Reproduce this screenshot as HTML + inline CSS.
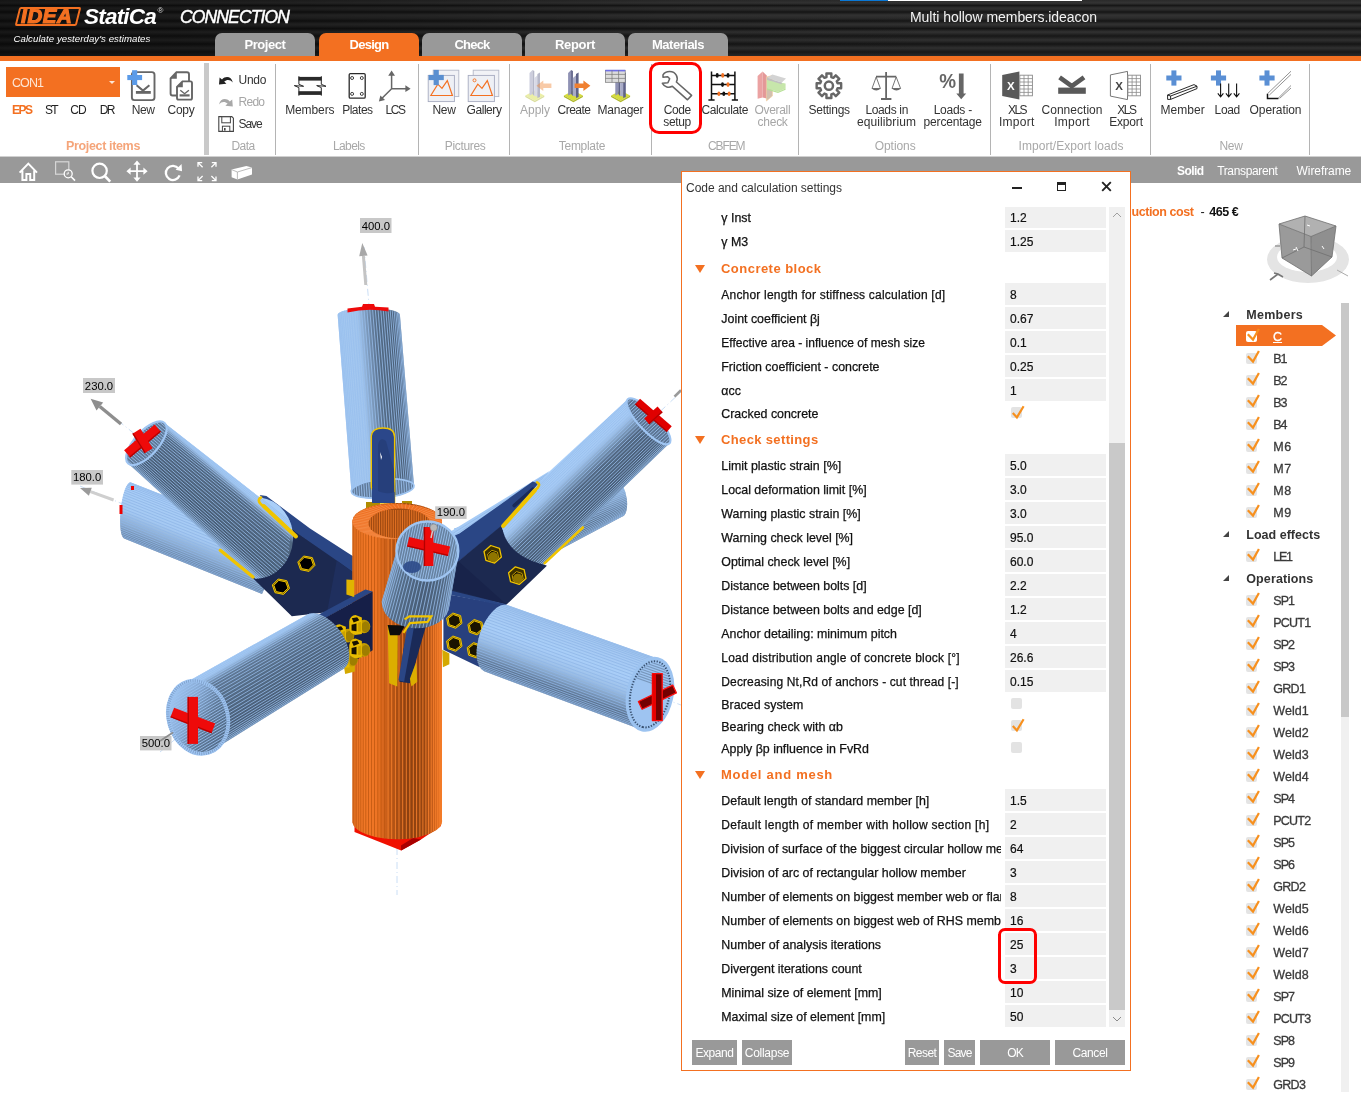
<!DOCTYPE html>
<html lang="en"><head><meta charset="utf-8"><title>IDEA StatiCa Connection</title>
<style>
html,body{margin:0;padding:0;background:#fff;}
body{width:1361px;height:1098px;position:relative;overflow:hidden;font-family:"Liberation Sans",sans-serif;}
.t{position:absolute;white-space:nowrap;margin:0;padding:0;}
.r{position:absolute;}
#app{position:absolute;left:0;top:0;width:1361px;height:1098px;will-change:transform;}
svg{overflow:visible}

#hdr{position:absolute;left:0;top:0;width:1361px;height:56px;background:
 linear-gradient(90deg, rgba(0,0,0,0.5) 0, rgba(0,0,0,0.35) 22%, rgba(0,0,0,0.08) 50%, rgba(0,0,0,0) 70%),
 linear-gradient(180deg,#2a2a2a 0,#343434 3px,#171717 5.5px,#303030 8px,#292929 10px,#151515 12px,#333 15px,#2c2c2c 18px,#161616 21px,#323232 24px,#2a2a2a 26px,#141414 28.6px,#323232 32px,#171717 36px,#303030 40px,#151515 44px,#303030 48px,#181818 52px,#2a2a2a 56px);}
#logo{position:absolute;left:17px;top:6.5px;width:62px;height:19px;box-sizing:border-box;border:2px solid #f37021;border-radius:2px;transform:skewX(-14deg);overflow:hidden;}
#logo span{position:absolute;left:2px;top:-3px;font:bold italic 20px "Liberation Sans",sans-serif;color:#f37021;letter-spacing:0.6px;transform:skewX(14deg) scaleX(1.02);transform-origin:left;line-height:20px;-webkit-text-stroke:1.2px #f37021;}
.tab{position:absolute;top:33px;width:100px;height:23px;border-radius:7px 7px 0 0;}

#dlg{position:absolute;left:681px;top:171px;width:450px;height:900px;box-sizing:border-box;border:1px solid #f37021;background:#fff;}
</style></head>
<body>
<div id="app">
<!-- part_header -->
<div id="hdr"></div>
<div class="r" style="left:840px;top:0px;width:48px;height:1px;background:#0a78d6;"></div>
<div class="r" style="left:888px;top:0px;width:194px;height:1px;background:#ffffff;"></div>
<div id="logo"><span>IDEA</span></div>
<div class="t" style="left:84.00px;top:3.90px;height:26px;line-height:26px;font-size:22.5px;color:#fff;font-weight:bold;font-style:italic;letter-spacing:-0.789px;">StatiCa</div>
<div class="t" style="left:157.50px;top:6.40px;height:10px;line-height:10px;font-size:8px;color:#ddd;">®</div>
<div class="t" style="left:180.00px;top:6.40px;height:22px;line-height:22px;font-size:17.5px;color:#fff;font-style:italic;letter-spacing:-0.864px;-webkit-text-stroke:0.45px #fff;">CONNECTION</div>
<div class="t" style="left:13.50px;top:32.90px;height:12px;line-height:12px;font-size:9.6px;color:#fff;font-style:italic;letter-spacing:0.074px;">Calculate yesterday&#x27;s estimates</div>
<div class="t" style="left:910.00px;top:7.90px;height:18px;line-height:18px;font-size:14px;color:#f2f2f2;letter-spacing:-0.047px;">Multi hollow members.ideacon</div>
<div class="tab" style="left:215px;background:#999"></div>
<div class="t" style="left:244.50px;top:37.40px;height:16px;line-height:16px;font-size:13px;color:#fff;font-weight:bold;letter-spacing:-0.439px;">Project</div>
<div class="tab" style="left:319px;background:#f37021"></div>
<div class="t" style="left:349.50px;top:37.40px;height:16px;line-height:16px;font-size:13px;color:#fff;font-weight:bold;letter-spacing:-0.724px;">Design</div>
<div class="tab" style="left:422px;background:#999"></div>
<div class="t" style="left:454.50px;top:37.40px;height:16px;line-height:16px;font-size:13px;color:#fff;font-weight:bold;letter-spacing:-0.804px;">Check</div>
<div class="tab" style="left:525px;background:#999"></div>
<div class="t" style="left:555.00px;top:37.40px;height:16px;line-height:16px;font-size:13px;color:#fff;font-weight:bold;letter-spacing:-0.315px;">Report</div>
<div class="tab" style="left:628px;background:#999"></div>
<div class="t" style="left:652.00px;top:37.40px;height:16px;line-height:16px;font-size:13px;color:#fff;font-weight:bold;letter-spacing:-0.485px;">Materials</div>
<div class="r" style="left:0px;top:56px;width:1361px;height:5px;background:#f37021;"></div>
<!-- part_ribbon -->
<div class="r" style="left:0px;top:61px;width:1361px;height:95px;background:#fff;"></div>
<div class="r" style="left:6px;top:67px;width:114px;height:30px;background:#f37021;"></div>
<div class="t" style="left:12.00px;top:74.90px;height:16px;line-height:16px;font-size:12.5px;color:#fde6d6;letter-spacing:-0.932px;">CON1</div>
<div style="position:absolute;left:109px;top:81px;width:0;height:0;border-left:3px solid transparent;border-right:3px solid transparent;border-top:3px solid #fde6d6"></div>
<div class="t" style="left:12.00px;top:101.90px;height:17px;line-height:17px;font-size:12px;color:#f37021;font-weight:bold;letter-spacing:-1.538px;">EPS</div>
<div class="t" style="left:45.00px;top:101.90px;height:17px;line-height:17px;font-size:12px;color:#222;letter-spacing:-1.667px;">ST</div>
<div class="t" style="left:70.20px;top:101.90px;height:17px;line-height:17px;font-size:12px;color:#222;letter-spacing:-0.966px;">CD</div>
<div class="t" style="left:99.70px;top:101.90px;height:17px;line-height:17px;font-size:12px;color:#222;letter-spacing:-1.666px;">DR</div>
<div class="t" style="left:131.70px;top:101.90px;height:17px;line-height:17px;font-size:12px;color:#333;letter-spacing:-0.336px;">New</div>
<div class="t" style="left:167.50px;top:101.90px;height:17px;line-height:17px;font-size:12px;color:#333;letter-spacing:-0.254px;">Copy</div>
<div class="t" style="left:66.00px;top:137.40px;height:18px;line-height:18px;font-size:12.5px;color:#f5a57a;font-weight:bold;letter-spacing:-0.347px;">Project items</div>
<div class="r" style="left:204px;top:63px;width:5px;height:92px;background:#c9c9c9;"></div>
<div class="t" style="left:238.60px;top:71.90px;height:17px;line-height:17px;font-size:12px;color:#333;letter-spacing:-0.297px;">Undo</div>
<div class="t" style="left:238.60px;top:93.90px;height:17px;line-height:17px;font-size:12px;color:#a6a6a6;letter-spacing:-0.747px;">Redo</div>
<div class="t" style="left:238.60px;top:115.90px;height:17px;line-height:17px;font-size:12px;color:#333;letter-spacing:-1.088px;">Save</div>
<div class="t" style="left:231.50px;top:137.90px;height:17px;line-height:17px;font-size:12px;color:#a8a8a8;letter-spacing:-0.587px;">Data</div>
<div class="r" style="left:275px;top:64px;width:1px;height:91px;background:#b4b4b4;"></div>
<div class="r" style="left:418px;top:64px;width:1px;height:91px;background:#b4b4b4;"></div>
<div class="r" style="left:509px;top:64px;width:1px;height:91px;background:#b4b4b4;"></div>
<div class="r" style="left:651px;top:64px;width:1px;height:91px;background:#b4b4b4;"></div>
<div class="r" style="left:798px;top:64px;width:1px;height:91px;background:#b4b4b4;"></div>
<div class="r" style="left:990px;top:64px;width:1px;height:91px;background:#b4b4b4;"></div>
<div class="r" style="left:1150px;top:64px;width:1px;height:91px;background:#b4b4b4;"></div>
<div class="r" style="left:1309px;top:64px;width:1px;height:91px;background:#b4b4b4;"></div>
<div class="t" style="left:285.15px;top:101.90px;height:17px;line-height:17px;font-size:12px;color:#333;letter-spacing:-0.102px;">Members</div>
<div class="t" style="left:342.20px;top:101.90px;height:17px;line-height:17px;font-size:12px;color:#333;letter-spacing:-0.492px;">Plates</div>
<div class="t" style="left:385.40px;top:101.90px;height:17px;line-height:17px;font-size:12px;color:#333;letter-spacing:-1.382px;">LCS</div>
<div class="t" style="left:333.05px;top:137.90px;height:17px;line-height:17px;font-size:12px;color:#a8a8a8;letter-spacing:-0.644px;">Labels</div>
<div class="t" style="left:432.50px;top:101.90px;height:17px;line-height:17px;font-size:12px;color:#333;letter-spacing:-0.336px;">New</div>
<div class="t" style="left:466.50px;top:101.90px;height:17px;line-height:17px;font-size:12px;color:#333;letter-spacing:-0.430px;">Gallery</div>
<div class="t" style="left:444.85px;top:137.90px;height:17px;line-height:17px;font-size:12px;color:#a8a8a8;letter-spacing:-0.331px;">Pictures</div>
<div class="t" style="left:520.00px;top:101.90px;height:17px;line-height:17px;font-size:12px;color:#a6a6a6;">Apply</div>
<div class="t" style="left:557.50px;top:101.90px;height:17px;line-height:17px;font-size:12px;color:#333;letter-spacing:-0.503px;">Create</div>
<div class="t" style="left:597.40px;top:101.90px;height:17px;line-height:17px;font-size:12px;color:#333;letter-spacing:-0.195px;">Manager</div>
<div class="t" style="left:558.80px;top:137.90px;height:17px;line-height:17px;font-size:12px;color:#a8a8a8;letter-spacing:-0.287px;">Template</div>
<div class="t" style="left:663.80px;top:101.90px;height:17px;line-height:17px;font-size:12px;color:#333;letter-spacing:-0.422px;">Code</div>
<div class="t" style="left:663.35px;top:113.90px;height:17px;line-height:17px;font-size:12px;color:#333;letter-spacing:-0.371px;">setup</div>
<div class="t" style="left:701.40px;top:101.90px;height:17px;line-height:17px;font-size:12px;color:#333;letter-spacing:-0.381px;">Calculate</div>
<div class="t" style="left:754.50px;top:101.90px;height:17px;line-height:17px;font-size:12px;color:#a6a6a6;letter-spacing:-0.316px;">Overall</div>
<div class="t" style="left:757.60px;top:113.90px;height:17px;line-height:17px;font-size:12px;color:#a6a6a6;letter-spacing:-0.270px;">check</div>
<div class="t" style="left:707.95px;top:137.90px;height:17px;line-height:17px;font-size:12px;color:#a8a8a8;letter-spacing:-1.100px;">CBFEM</div>
<div class="t" style="left:808.55px;top:101.90px;height:17px;line-height:17px;font-size:12px;color:#333;letter-spacing:-0.258px;">Settings</div>
<div class="t" style="left:865.40px;top:101.90px;height:17px;line-height:17px;font-size:12px;color:#333;letter-spacing:-0.346px;">Loads in</div>
<div class="t" style="left:857.00px;top:113.90px;height:17px;line-height:17px;font-size:12px;color:#333;letter-spacing:0.088px;">equilibrium</div>
<div class="t" style="left:933.65px;top:101.90px;height:17px;line-height:17px;font-size:12px;color:#333;letter-spacing:-0.247px;">Loads -</div>
<div class="t" style="left:923.60px;top:113.90px;height:17px;line-height:17px;font-size:12px;color:#333;letter-spacing:-0.185px;">percentage</div>
<div class="t" style="left:874.70px;top:137.90px;height:17px;line-height:17px;font-size:12px;color:#a8a8a8;letter-spacing:-0.051px;">Options</div>
<div class="t" style="left:1007.90px;top:101.90px;height:17px;line-height:17px;font-size:12px;color:#333;letter-spacing:-1.494px;">XLS</div>
<div class="t" style="left:999.00px;top:113.90px;height:17px;line-height:17px;font-size:12px;color:#333;letter-spacing:0.265px;">Import</div>
<div class="t" style="left:1041.50px;top:101.90px;height:17px;line-height:17px;font-size:12px;color:#333;letter-spacing:0.029px;">Connection</div>
<div class="t" style="left:1054.20px;top:113.90px;height:17px;line-height:17px;font-size:12px;color:#333;letter-spacing:0.265px;">Import</div>
<div class="t" style="left:1117.20px;top:101.90px;height:17px;line-height:17px;font-size:12px;color:#333;letter-spacing:-1.494px;">XLS</div>
<div class="t" style="left:1109.20px;top:113.90px;height:17px;line-height:17px;font-size:12px;color:#333;letter-spacing:-0.180px;">Export</div>
<div class="t" style="left:1018.50px;top:137.90px;height:17px;line-height:17px;font-size:12px;color:#a8a8a8;letter-spacing:0.050px;">Import/Export loads</div>
<div class="t" style="left:1160.60px;top:101.90px;height:17px;line-height:17px;font-size:12px;color:#333;letter-spacing:0.031px;">Member</div>
<div class="t" style="left:1214.60px;top:101.90px;height:17px;line-height:17px;font-size:12px;color:#333;letter-spacing:-0.374px;">Load</div>
<div class="t" style="left:1249.60px;top:101.90px;height:17px;line-height:17px;font-size:12px;color:#333;letter-spacing:-0.100px;">Operation</div>
<div class="t" style="left:1219.40px;top:137.90px;height:17px;line-height:17px;font-size:12px;color:#a8a8a8;letter-spacing:-0.269px;">New</div>
<div style="position:absolute;left:648.5px;top:62.4px;width:47.1px;height:65.9px;border:3.7px solid #f00;border-radius:10px"></div>
<div class="r" style="left:0px;top:156px;width:1361px;height:1px;background:#d0d0d0;"></div>
<div class="r" style="left:0px;top:157px;width:1361px;height:26px;background:#999999;"></div>
<div class="t" style="left:1177.00px;top:163.40px;height:17px;line-height:17px;font-size:12px;color:#fff;font-weight:bold;letter-spacing:-0.566px;">Solid</div>
<div class="t" style="left:1217.20px;top:163.40px;height:17px;line-height:17px;font-size:12px;color:#fff;letter-spacing:-0.351px;">Transparent</div>
<div class="t" style="left:1296.60px;top:163.40px;height:17px;line-height:17px;font-size:12px;color:#fff;letter-spacing:-0.082px;">Wireframe</div>
<!-- part_icons -->
<svg id="icons" style="position:absolute;left:0;top:61px" width="1361" height="125" viewBox="0 61 1361 125">
<rect x="131.9" y="72.1" width="22.6" height="28" rx="2.6" fill="#fff" stroke="#666" stroke-width="1.9"/>
<path d="M136.6 85.3 L143 90.6 L149.4 85.3" stroke="#666" stroke-width="2" fill="none"/><rect x="135.9" y="91" width="14.9" height="2.8" fill="#666"/>
<rect x="127.3" y="75.0" width="14.8" height="5.1" fill="#5b9be8"/><rect x="132.1" y="70.2" width="5.1" height="14.8" fill="#5b9be8"/>
<path d="M176.5 72.2 L187 72.2 Q189 72.2 189 74.2 L189 95.5 L172.5 95.5 Q170.6 95.5 170.6 93.5 L170.6 78.5 Z" fill="#fff" stroke="#666" stroke-width="1.9"/>
<path d="M176.8 72.4 L176.8 78.8 L170.8 78.8 Z" fill="#666"/>
<path d="M182.5 81.4 L190.5 81.4 Q192 81.4 192 83 L192 98 Q192 99.6 190.5 99.6 L178.6 99.6 Q177 99.6 177 98 L177 87 Z" fill="#fff" stroke="#666" stroke-width="1.9"/>
<path d="M182.8 81.6 L182.8 87.3 L177.2 87.3 Z" fill="#666"/>
<path d="M180.3 90.2 L184.6 93.7 L188.9 90.2" stroke="#666" stroke-width="1.4" fill="none"/><rect x="179.6" y="94.3" width="10" height="2.2" fill="#666"/>
<path d="M219 84.6 L219.6 77.4 L222 79.4 C226 75.4 231.5 76.6 232.8 82.5 C230.5 79.6 227 79.2 224.2 81.6 L226.4 83.8 Z" fill="#222"/>
<path d="M232.8 106.6 L232.2 99.4 L229.8 101.4 C225.8 97.4 220.3 98.6 219 104.5 C221.3 101.6 224.8 101.2 227.6 103.6 L225.4 105.8 Z" fill="#a8a8a8"/>
<path d="M218.8 116.6 L231.8 116.6 L233.4 118.2 L233.4 131.4 L218.8 131.4 Z" fill="#fff" stroke="#444" stroke-width="1.1"/><rect x="221.8" y="116.8" width="8.6" height="6" fill="#fff" stroke="#444" stroke-width="1"/><rect x="222.4" y="126.2" width="7.4" height="5.2" fill="#fff" stroke="#444" stroke-width="1"/><rect x="224" y="128" width="1.6" height="2.6" fill="#444"/>
<g fill="#2a2a2a" stroke="none">
<rect x="298.5" y="76.9" width="23.2" height="3.7"/><rect x="298.5" y="91.2" width="23.2" height="3.7"/>
</g>
<path d="M298.9 76.2 L298.9 84.3 L303.6 86.3 L294.3 85.6 L298.9 87.6 L298.9 95.7 M321.3 76.2 L321.3 84.3 L326 86.3 L316.7 85.6 L321.3 87.6 L321.3 95.7" stroke="#2a2a2a" stroke-width="1" fill="none"/>
<rect x="349.2" y="73.6" width="16" height="24.6" rx="1.2" fill="#fff" stroke="#2a2a2a" stroke-width="1.3"/>
<circle cx="352.1" cy="78" r="1.5" fill="#fff" stroke="#2a2a2a" stroke-width="0.9"/>
<circle cx="361.8" cy="78" r="1.5" fill="#fff" stroke="#2a2a2a" stroke-width="0.9"/>
<circle cx="352.1" cy="93.9" r="1.5" fill="#fff" stroke="#2a2a2a" stroke-width="0.9"/>
<circle cx="361.8" cy="93.9" r="1.5" fill="#fff" stroke="#2a2a2a" stroke-width="0.9"/>
<path d="M391.6 88.7 L391.6 74 M391.6 88.7 L406.5 88.7 M391.6 88.7 L381.5 98.8" stroke="#666" stroke-width="1.5" fill="none"/>
<polygon points="391.6,70.6 388.2,75.8 395,75.8" fill="#666"/><polygon points="410.6,88.7 405.4,85.3 405.4,92.1" fill="#666"/><polygon points="378.9,101.6 380.4,95.4 385,100" fill="#666"/>
<rect x="433.2" y="70.2" width="25.6" height="26.4" fill="#f1f2f6" stroke="#b4b8c8" stroke-width="0.9"/>
<rect x="428.2" y="75.4" width="26.2" height="26.2" fill="#eef0f5" stroke="#a6abc0" stroke-width="0.9"/>
<path d="M430.8 95.5 L437.8 84.2 L442.0 88.4 L447.3 80.6 L452.4 95.5 Z" fill="none" stroke="#f37021" stroke-width="1.2"/>
<rect x="428.6" y="74.9" width="15.2" height="5.2" fill="#5a8fd0"/><rect x="433.6" y="69.9" width="5.2" height="15.2" fill="#5a8fd0"/>
<rect x="473.2" y="70.2" width="25.6" height="26.4" fill="#f1f2f6" stroke="#b4b8c8" stroke-width="0.9"/>
<rect x="468.2" y="75.4" width="26.2" height="26.2" fill="#eef0f5" stroke="#a6abc0" stroke-width="0.9"/>
<path d="M470.8 95.5 L477.8 84.2 L482.0 88.4 L487.3 80.6 L492.4 95.5 Z" fill="none" stroke="#f37021" stroke-width="1.2"/>
<circle cx="474.5" cy="80.3" r="1.5" fill="none" stroke="#f37021" stroke-width="0.9"/>
<g opacity="0.45">
<polygon points="525.3,95.5 534.8,90.5 544.3,95.5 534.8,100.8" fill="#d5dc3c"/>
<polygon points="525.3,95.5 534.8,100.8 544.3,95.5 544.3,97 534.8,102.3 525.3,97" fill="#b0b82a"/>
<polygon points="529.5,73 532.5,70 532.5,94 529.5,95.5" fill="#8f92b4"/>
<polygon points="532.5,70 534.3,71 534.3,96 532.5,94" fill="#5f6389"/>
<polygon points="534.3,78 537.8,75 537.8,96.5 534.3,96" fill="#a9acc8"/>
<polygon points="537.4,74 540.0,72.4 540.0,97 537.4,98" fill="#5f6389"/>
</g>
<g opacity="0.45"><polygon points="536.4,85.8 543.3,80.6 543.3,83.6 551.4,83.6 551.4,88 543.3,88 543.3,91 " fill="#f08a3c"/></g>
<g opacity="1">
<polygon points="563.9,95.5 573.4,90.5 582.9,95.5 573.4,100.8" fill="#d5dc3c"/>
<polygon points="563.9,95.5 573.4,100.8 582.9,95.5 582.9,97 573.4,102.3 563.9,97" fill="#b0b82a"/>
<polygon points="568.1,73 571.1,70 571.1,94 568.1,95.5" fill="#8f92b4"/>
<polygon points="571.1,70 572.9,71 572.9,96 571.1,94" fill="#5f6389"/>
<polygon points="572.9,78 576.4,75 576.4,96.5 572.9,96" fill="#a9acc8"/>
<polygon points="576.0,74 578.6,72.4 578.6,97 576.0,98" fill="#5f6389"/>
</g>
<polygon points="590.4,85.8 583.4,80.5 583.4,83.5 574.6,83.5 574.6,88.1 583.4,88.1 583.4,91.1" fill="#f08030"/>
<g opacity="1">
<polygon points="611.1,95.5 620.6,90.5 630.1,95.5 620.6,100.8" fill="#d5dc3c"/>
<polygon points="611.1,95.5 620.6,100.8 630.1,95.5 630.1,97 620.6,102.3 611.1,97" fill="#b0b82a"/>
<polygon points="615.3,73 618.3,70 618.3,94 615.3,95.5" fill="#8f92b4"/>
<polygon points="618.3,70 620.1,71 620.1,96 618.3,94" fill="#5f6389"/>
<polygon points="620.1,78 623.6,75 623.6,96.5 620.1,96" fill="#a9acc8"/>
<polygon points="623.2,74 625.8,72.4 625.8,97 623.2,98" fill="#5f6389"/>
</g>
<rect x="605.4" y="70.3" width="19.8" height="12" fill="#dcdcdc" stroke="#777" stroke-width="0.7"/><rect x="605.4" y="69.8" width="19.8" height="1.6" fill="#6f6fe6"/>
<path d="M605.4 74.4 H625.2 M605.4 78.4 H625.2 M612 70.3 V82.3 M618.6 70.3 V82.3" stroke="#777" stroke-width="0.7" fill="none"/>
<path d="M663 74.9 C665.6 70.6 673.6 70.2 676.4 75.4 C677.6 77.7 677.4 80 676.4 82 L691.6 95.4 L687.5 99.8 L672.4 86.3 C668.8 88.2 664.4 87 662.4 83.3 L667.9 82.7 L669.7 78.8 L667.7 76.8 L663 77.2 Z" fill="#fff" stroke="#666" stroke-width="1.55" stroke-linejoin="round"/>
<path d="M711.5 71.4 V100 M734.9 71.4 V100 M708.4 100 H714.6 M731.8 100 H738 M711.5 75.4 H734.9 M711.5 84.6 H734.9 M711.5 93.7 H734.9" stroke="#111" stroke-width="1.5" fill="none"/>
<ellipse cx="717.2" cy="75.4" rx="1.5" ry="2.3" fill="#111"/>
<ellipse cx="722.7" cy="75.4" rx="1.5" ry="2.3" fill="#f37021"/>
<ellipse cx="728" cy="75.4" rx="1.5" ry="2.3" fill="#111"/>
<ellipse cx="722.5" cy="84.6" rx="1.5" ry="2.3" fill="#111"/>
<ellipse cx="728" cy="84.6" rx="1.5" ry="2.3" fill="#f37021"/>
<ellipse cx="718.9" cy="93.7" rx="1.5" ry="2.3" fill="#f37021"/>
<ellipse cx="723.8" cy="93.7" rx="1.5" ry="2.3" fill="#111"/>
<ellipse cx="729.1" cy="93.7" rx="1.5" ry="2.3" fill="#f37021"/>
<g opacity="0.62">
<polygon points="757.6,76 762.6,71.4 762.6,97.6 757.6,98.8" fill="#e06a6a"/><polygon points="762.6,71.4 766.8,75.5 766.8,98.5 762.6,97.6" fill="#d45a5a"/>
<polygon points="766.4,77 772.4,75.5 772.4,96 766.4,101" fill="#b59a80" stroke="#f0b060" stroke-width="0.6"/>
<polygon points="767,80 785.6,83.5 785.6,88.6 778,91.8 767,88.6" fill="#a5d878"/><polygon points="767,88.6 778,91.8 785.6,88.6 785.6,89.8 778,93 767,89.8" fill="#8ccf58"/>
<polygon points="767,78 772.4,74.6 786,78.4 781.8,82.6" fill="#b9b9b9"/><polygon points="767,78 781.8,82.6 781.8,84.2 767,79.8" fill="#9a9a9a"/>
</g>
<path d="M826.42 73.45 L831.38 73.45 L831.30 77.03 L833.34 77.87 L835.81 75.28 L839.32 78.79 L836.73 81.26 L837.57 83.30 L841.15 83.22 L841.15 88.18 L837.57 88.10 L836.73 90.14 L839.32 92.61 L835.81 96.12 L833.34 93.53 L831.30 94.37 L831.38 97.95 L826.42 97.95 L826.50 94.37 L824.46 93.53 L821.99 96.12 L818.48 92.61 L821.07 90.14 L820.23 88.10 L816.65 88.18 L816.65 83.22 L820.23 83.30 L821.07 81.26 L818.48 78.79 L821.99 75.28 L824.46 77.87 L826.50 77.03 Z" fill="#fff" stroke="#666" stroke-width="2.4" stroke-linejoin="round"/>
<circle cx="828.9" cy="85.7" r="4.1" fill="#fff" stroke="#666" stroke-width="2.5"/>
<path d="M886.1 72 V99 M876 76.7 H896.3 M881 99 H891.4" stroke="#666" stroke-width="1.8" fill="none"/>
<path d="M876.2 77 L872 88.5 H880.4 Z M896.2 77 L892 88.5 H900.6 Z" stroke="#666" stroke-width="0.9" fill="none"/>
<path d="M871.6 88.5 Q876.2 92.6 880.8 88.5 Z M891.8 88.5 Q896.4 92.6 901 88.5 Z" fill="#666"/>
<text x="939.2" y="88" font-family="Liberation Sans, sans-serif" font-weight="bold" font-size="19.5" fill="#666" textLength="16.8" lengthAdjust="spacingAndGlyphs">%</text>
<polygon points="958.9,73.4 963.6,73.4 963.6,93.4 966.2,93.4 961.2,99.2 956.3,93.4 958.9,93.4" fill="#666"/>
<polygon points="1002.2,74.9 1019.4,71.4 1019.4,99.6 1002.2,96.1" fill="#595959"/>
<text x="1010.9" y="89.6" text-anchor="middle" font-family="Liberation Sans, sans-serif" font-weight="bold" font-size="11.5" fill="#fff">X</text>
<rect x="1019.8" y="75.2" width="12.6" height="20.6" fill="#fff" stroke="#8a8a8a" stroke-width="0.9"/>
<path d="M1019.8 78.6 h12.6 M1019.8 82 h12.6 M1019.8 85.5 h12.6 M1019.8 89 h12.6 M1019.8 92.4 h12.6 M1024.0 75.2 v20.6 M1028.2 75.2 v20.6" stroke="#8a8a8a" stroke-width="0.8" fill="none"/>
<path d="M1059.6 77.4 L1071.8 86.2 L1084 77.4" stroke="#595959" stroke-width="4.6" fill="none"/><rect x="1058.2" y="87.6" width="27.6" height="6.2" fill="#595959"/>
<polygon points="1110.4,74.9 1127.5,71.4 1127.5,99.6 1110.4,96.1" fill="#fff" stroke="#777" stroke-width="1"/>
<text x="1119" y="89.6" text-anchor="middle" font-family="Liberation Sans, sans-serif" font-weight="bold" font-size="11.5" fill="#444">X</text>
<rect x="1127.9" y="75.2" width="12.6" height="20.6" fill="#fff" stroke="#8a8a8a" stroke-width="0.9"/>
<path d="M1127.9 78.6 h12.6 M1127.9 82 h12.6 M1127.9 85.5 h12.6 M1127.9 89 h12.6 M1127.9 92.4 h12.6 M1132.1000000000001 75.2 v20.6 M1136.3000000000002 75.2 v20.6" stroke="#8a8a8a" stroke-width="0.8" fill="none"/>
<rect x="1166.3" y="75.5" width="15.2" height="5.0" fill="#5a8fd4"/><rect x="1171.4" y="70.4" width="5.0" height="15.2" fill="#5a8fd4"/>
<path d="M1167.6 95 L1194 84.6 L1197 86.2 L1197 88.6 L1170.6 99.4 L1167.6 99.4 Z M1167.6 95 L1170.6 96 L1197 86.2 M1170.6 96 L1170.6 99.4" fill="#fff" stroke="#111" stroke-width="0.9" stroke-linejoin="round"/>
<rect x="1210.9" y="75.5" width="15.2" height="5.0" fill="#5a8fd4"/><rect x="1216.0" y="70.4" width="5.0" height="15.2" fill="#5a8fd4"/>
<path d="M1220.6 83.6 V96.6 M1217.8 93.4 L1220.6 96.8 L1223.3999999999999 93.4" stroke="#111" stroke-width="1.1" fill="none"/>
<path d="M1228.7 83.6 V96.6 M1225.9 93.4 L1228.7 96.8 L1231.5 93.4" stroke="#111" stroke-width="1.1" fill="none"/>
<path d="M1236.6 83.6 V96.6 M1233.8 93.4 L1236.6 96.8 L1239.3999999999999 93.4" stroke="#111" stroke-width="1.1" fill="none"/>
<rect x="1259.4" y="75.5" width="15.2" height="5.0" fill="#5a8fd4"/><rect x="1264.5" y="70.4" width="5.0" height="15.2" fill="#5a8fd4"/>
<path d="M1267.5 93.7 L1291 71.2 M1269.4 95 L1291 74.4 M1278 98.4 L1291 85.5 M1279.6 98.4 L1291 88" stroke="#777" stroke-width="0.8" fill="none"/>
<path d="M1267.5 93.7 V98.4 H1278.4" stroke="#111" stroke-width="1.5" fill="none"/>
<g fill="none" stroke="#fff" stroke-width="2" stroke-linejoin="miter">
<path d="M19.6 172.6 L28.3 163.6 L37 172.6 M22.4 170.6 V180 H26.4 V174 H30.2 V180 H34.2 V170.6"/>
</g>
<rect x="55.6" y="161.8" width="13.2" height="12.4" fill="none" stroke="#d6d6d6" stroke-width="1.2"/>
<circle cx="68.2" cy="173.8" r="4" fill="#999" stroke="#fff" stroke-width="1.3"/><path d="M71.2 176.8 L75 180.6" stroke="#fff" stroke-width="1.6"/><path d="M68.2 171.8 V174 H66.4" stroke="#fff" stroke-width="0.9" fill="none"/>
<circle cx="99.6" cy="170.8" r="7.2" fill="none" stroke="#fff" stroke-width="2.2"/><path d="M104.8 176 L110.2 181.6" stroke="#fff" stroke-width="2.6"/>
<path d="M137 163.4 V179 M129.2 171.2 H144.8" stroke="#fff" stroke-width="1.8"/>
<polygon points="137,160.6 133.4,164.8 140.6,164.8" fill="#fff"/><polygon points="137,181.8 133.4,177.6 140.6,177.6" fill="#fff"/><polygon points="126.4,171.2 130.6,167.6 130.6,174.8" fill="#fff"/><polygon points="147.6,171.2 143.4,167.6 143.4,174.8" fill="#fff"/>
<path d="M178.6 168.6 A7.1 7.1 0 1 0 179.6 175.4" fill="none" stroke="#fff" stroke-width="2.3"/><polygon points="175.6,169.8 181.6,164 182,171.2" fill="#fff"/>
<g stroke="#fff" stroke-width="1.3" fill="none">
<path d="M202.6 167.2 L198.0 162.6 M202.2 162.6 H198.0 V166.8"/>
<path d="M211.4 167.2 L216.0 162.6 M211.8 162.6 H216.0 V166.8"/>
<path d="M202.6 176.0 L198.0 180.6 M202.2 180.6 H198.0 V176.4"/>
<path d="M211.4 176.0 L216.0 180.6 M211.8 180.6 H216.0 V176.4"/>
</g>
<polygon points="231.6,169.6 246.4,166 252,167.6 252,174.6 237.4,179.6 231.6,177.2" fill="#fff"/><path d="M231.6 169.6 L237.4 172 L252 167.6 M237.4 172 V179.6" stroke="#aaa" stroke-width="0.8" fill="none"/>
</svg>
<!-- part_model -->
<svg id="model" style="position:absolute;left:0;top:183px" width="681" height="915" viewBox="0 183 681 915">
<g stroke="#bcd6f2" stroke-width="0.8" stroke-dasharray="7 3 1 3" fill="none">
<path d="M397 848 L397 895"/><path d="M364 247 L369 305"/><path d="M96 403 L146 443"/><path d="M80 486 L125 505"/><path d="M650 421 L681 392"/><path d="M651 694 L681 705"/><path d="M160 752 L198 720"/>
</g>
<clipPath id="g1"><path d="M130.5 482.3 L285.0 543.0 L262.0 594.0 L124.7 538.7 A28.3 7.0 -84.1 0 1 130.5 482.3 Z"/></clipPath>
<linearGradient id="g2" gradientUnits="userSpaceOnUse" x1="210.7" y1="513.8" x2="190.4" y2="565.2"><stop offset="0.000" stop-color="#a9cef8"/><stop offset="0.062" stop-color="#a9cdf7"/><stop offset="0.125" stop-color="#a8cdf7"/><stop offset="0.188" stop-color="#a8ccf6"/><stop offset="0.250" stop-color="#a7ccf5"/><stop offset="0.312" stop-color="#a7cbf5"/><stop offset="0.375" stop-color="#a6cbf4"/><stop offset="0.438" stop-color="#a6caf3"/><stop offset="0.500" stop-color="#a5c9f3"/><stop offset="0.562" stop-color="#9fc2ea"/><stop offset="0.625" stop-color="#99bbe2"/><stop offset="0.688" stop-color="#92b3d9"/><stop offset="0.750" stop-color="#8cacd1"/><stop offset="0.812" stop-color="#819fc2"/><stop offset="0.875" stop-color="#7693b4"/><stop offset="0.938" stop-color="#6b86a5"/><stop offset="1.000" stop-color="#607996"/></linearGradient>
<path d="M130.5 482.3 L285.0 543.0 L262.0 594.0 L124.7 538.7 A28.3 7.0 -84.1 0 1 130.5 482.3 Z" fill="url(#g2)"/>
<g clip-path="url(#g1)" stroke="#8fb6e6" stroke-width="0.78" fill="none" opacity="1.0">
<path d="M93.3 467.7L322.2 557.6M93.2 468.8L321.8 558.6M93.0 470.1L321.2 559.8M92.9 471.6L320.6 561.2M92.7 473.3L319.9 562.8M92.5 475.3L319.1 564.6M92.3 477.4L318.2 566.5M92.1 479.7L317.3 568.6M91.8 482.1L316.3 570.8M91.5 484.7L315.2 573.2M91.3 487.3L314.1 575.6M91.0 490.1L313.0 578.1M90.7 492.9L311.8 580.7M90.4 495.7L310.7 583.3M90.1 498.6L309.5 585.9M89.9 501.4L308.3 588.4M89.6 504.1L307.2 590.9M89.3 506.8L306.1 593.4M89.1 509.3L305.1 595.7M88.8 511.8L304.1 598.0M88.6 514.1L303.1 600.1M88.4 516.2L302.2 602.0M88.2 518.1L301.4 603.8M88.0 519.8L300.7 605.4M87.8 521.4L300.1 606.8M87.7 522.7L299.6 608.0M87.6 523.8L299.1 608.9"/>
</g>
<rect x="119.5" y="505" width="3" height="9" fill="#e00"/><rect x="131" y="486" width="3" height="4" fill="#e00"/>
<clipPath id="g3"><path d="M454.0 528.6 L618.0 482.7 A17.1 7.0 82.8 0 1 622.3 516.6 L484.6 589.7 Z"/></clipPath>
<linearGradient id="g4" gradientUnits="userSpaceOnUse" x1="535.4" y1="505.9" x2="554.0" y2="552.9"><stop offset="0.000" stop-color="#9fc3eb"/><stop offset="0.062" stop-color="#9cbfe7"/><stop offset="0.125" stop-color="#99bce3"/><stop offset="0.188" stop-color="#96b8df"/><stop offset="0.250" stop-color="#93b5db"/><stop offset="0.312" stop-color="#90b1d7"/><stop offset="0.375" stop-color="#8daed3"/><stop offset="0.438" stop-color="#85a4c8"/><stop offset="0.500" stop-color="#7a97b9"/><stop offset="0.562" stop-color="#6f8aaa"/><stop offset="0.625" stop-color="#647d9b"/><stop offset="0.688" stop-color="#59718c"/><stop offset="0.750" stop-color="#566d88"/><stop offset="0.812" stop-color="#556c87"/><stop offset="0.875" stop-color="#546b86"/><stop offset="0.938" stop-color="#536984"/><stop offset="1.000" stop-color="#526883"/></linearGradient>
<path d="M454.0 528.6 L618.0 482.7 A17.1 7.0 82.8 0 1 622.3 516.6 L484.6 589.7 Z" fill="url(#g4)"/>
<g clip-path="url(#g3)" stroke="#98bfed" stroke-width="0.78" fill="none" opacity="1.0">
<path d="M415.5 539.4L656.5 471.9M416.1 540.7L656.6 472.4M416.9 542.3L656.6 473.0M417.8 544.2L656.7 473.8M418.8 546.3L656.7 474.6M419.9 548.7L656.8 475.5M421.2 551.3L656.9 476.5M422.5 554.1L656.9 477.5M424.0 557.1L657.0 478.7M425.5 560.2L657.1 479.9M427.1 563.5L657.2 481.1M428.7 566.9L657.2 482.4M430.4 570.3L657.3 483.7M432.1 573.8L657.4 485.0M433.8 577.3L657.4 486.3M435.5 580.8L657.5 487.6M437.2 584.2L657.5 488.8M438.8 587.5L657.5 490.1M440.4 590.6L657.6 491.2M441.8 593.6L657.6 492.4M443.3 596.5L657.6 493.4M444.6 599.1L657.6 494.4M445.8 601.5L657.6 495.3M446.8 603.6L657.6 496.1M447.8 605.5L657.6 496.8M448.6 607.1L657.6 497.3M449.3 608.5L657.6 497.8"/>
</g>
<polygon points="257.9,497.5 296.7,532.1 337.9,560.0 353.7,570.9 353.7,595.9 327.0,612.2 291.8,616.3 252.3,577.5" fill="#1c2950" />
<polygon points="259.6,495.0 266.4,496.0 310.0,528.5 354.2,557.1 354.2,573.1 336.7,560.5 295.5,532.1" fill="#2a4685" />
<polygon points="336.7,560.5 354.2,573.1 354.2,595.9 327.0,612.2" fill="#1f2f5e" />
<polygon points="436.6,532.9 451.8,530.8 549.1,471.3 543.6,482.7 532.7,484.9 456.2,539.5 436.6,548.2" fill="#a6cbf6" />
<g stroke="#8fb6e6" stroke-width="0.7"><path d="M453.2 533.2 L548.4 473.3"/><path d="M454.5 535.1 L547.8 475.3"/><path d="M455.8 537.1 L547.1 477.2"/><path d="M457.1 539.1 L546.5 479.2"/></g>
<polygon points="443.1,540.6 459.5,533.4 532.7,481.6 538.6,483.6 501.0,526.8 458.4,561.8 438.7,554.8" fill="#2a4685" />
<polygon points="501.0,525.9 458.4,561.3 438.7,554.8 438.7,589.7 506.5,604.6 546.9,565.7 521.8,554.8 506.5,537.3" fill="#1c2950" />
<polygon points="458.4,561.3 452.9,589.7 506.5,604.6" fill="#18234a" />
<path d="M514.1 505.6 L532.7 489.2" stroke="#1b2a58" stroke-width="3.5" stroke-linecap="round"/>
<clipPath id="g5"><path d="M164.6 423.0 L259.9 497.5 A40.7 37.0 93.3 0 1 255.2 578.7 L128.2 463.5 Z"/></clipPath>
<linearGradient id="g6" gradientUnits="userSpaceOnUse" x1="221.3" y1="468.0" x2="182.6" y2="513.4"><stop offset="0.000" stop-color="#a9cef8"/><stop offset="0.062" stop-color="#a2c6ef"/><stop offset="0.125" stop-color="#718cac"/><stop offset="0.188" stop-color="#516882"/><stop offset="0.250" stop-color="#506781"/><stop offset="0.312" stop-color="#506680"/><stop offset="0.375" stop-color="#4f657f"/><stop offset="0.438" stop-color="#4e647e"/><stop offset="0.500" stop-color="#4d637d"/><stop offset="0.562" stop-color="#4c627b"/><stop offset="0.625" stop-color="#4b617a"/><stop offset="0.688" stop-color="#4a6079"/><stop offset="0.750" stop-color="#495f78"/><stop offset="0.812" stop-color="#495e77"/><stop offset="0.875" stop-color="#4d637c"/><stop offset="0.938" stop-color="#59718d"/><stop offset="1.000" stop-color="#82a1c4"/></linearGradient>
<path d="M164.6 423.0 L259.9 497.5 A40.7 37.0 93.3 0 1 255.2 578.7 L128.2 463.5 Z" fill="url(#g6)"/>
<g clip-path="url(#g5)" stroke="#98bfed" stroke-width="0.78" fill="none" opacity="1.0">
<path d="M133.1 398.4L291.4 522.1M132.5 399.0L291.3 523.6M131.8 399.8L291.1 525.3M131.0 400.6L291.0 527.3M130.1 401.6L290.8 529.5M129.1 402.7L290.6 532.0M128.0 403.9L290.4 534.7M126.8 405.3L290.1 537.6M125.6 406.7L289.9 540.7M124.2 408.1L289.6 544.0M122.8 409.7L289.3 547.5M121.4 411.3L289.0 551.0M119.8 413.0L288.7 554.7M118.3 414.7L288.4 558.4M116.8 416.4L288.1 562.2M115.2 418.2L287.8 566.0M113.6 419.9L287.5 569.7M112.1 421.6L287.2 573.4M110.6 423.3L287.0 577.1M109.1 424.9L286.7 580.6M107.7 426.5L286.4 584.0M106.3 428.0L286.2 587.3M105.0 429.5L286.0 590.3M103.8 430.8L285.7 593.2M102.7 432.1L285.5 595.9M101.6 433.2L285.4 598.3M100.7 434.3L285.2 600.5M99.9 435.2L285.1 602.5M99.2 436.0L284.9 604.2M98.6 436.6L284.8 605.6"/>
</g>
<clipPath id="g7"><ellipse cx="146.4" cy="443.2" rx="26.1" ry="10.9" transform="rotate(131.9 146.4 443.2)"/></clipPath>
<ellipse cx="146.4" cy="443.2" rx="27.2" ry="12.0" transform="rotate(131.9 146.4 443.2)" fill="#607a99" stroke="#9fc5f2" stroke-width="2.2"/>
<g clip-path="url(#g7)" stroke="#9dc3f0" stroke-width="0.9" opacity="0.95">
<path d="M142.8 397.8L191.8 439.7"/>
<path d="M141.2 399.7L190.2 441.6"/>
<path d="M139.6 401.6L188.6 443.5"/>
<path d="M138.0 403.5L187.0 445.4"/>
<path d="M136.3 405.4L185.3 447.3"/>
<path d="M134.7 407.3L183.7 449.2"/>
<path d="M133.1 409.2L182.1 451.1"/>
<path d="M131.5 411.1L180.5 453.0"/>
<path d="M129.8 413.0L178.8 454.9"/>
<path d="M128.2 414.9L177.2 456.8"/>
<path d="M126.6 416.8L175.6 458.7"/>
<path d="M125.0 418.7L174.0 460.6"/>
<path d="M123.3 420.6L172.4 462.5"/>
<path d="M121.7 422.5L170.7 464.4"/>
<path d="M120.1 424.4L169.1 466.3"/>
<path d="M118.5 426.3L167.5 468.2"/>
<path d="M116.8 428.2L165.9 470.1"/>
<path d="M115.2 430.1L164.2 472.0"/>
<path d="M113.6 432.0L162.6 473.9"/>
<path d="M112.0 433.9L161.0 475.8"/>
<path d="M110.4 435.8L159.4 477.7"/>
<path d="M108.7 437.7L157.7 479.6"/>
<path d="M107.1 439.6L156.1 481.5"/>
<path d="M105.5 441.5L154.5 483.4"/>
<path d="M103.9 443.4L152.9 485.3"/>
<path d="M102.2 445.3L151.2 487.2"/>
</g>
<g transform="translate(142.5 441.0) rotate(-40)"><rect x="-20.0" y="-4.8" width="40.0" height="9.5" fill="#ee0a0a"/><rect x="-20.0" y="3.5" width="40.0" height="1.3" fill="#b40000"/></g><g transform="translate(142.5 441.0) rotate(58)"><rect x="-11.5" y="-4.8" width="23.0" height="9.5" fill="#ee0a0a"/><rect x="-11.5" y="3.5" width="23.0" height="1.3" fill="#b40000"/></g>
<clipPath id="g8"><path d="M627.7 399.2 L549.1 471.8 L538.6 483.6 L502.1 526.8 Q506.5 554.8 543.6 564.6 L669.2 443.4 Z"/></clipPath>
<linearGradient id="g9" gradientUnits="userSpaceOnUse" x1="564.6" y1="459.8" x2="606.8" y2="503.7"><stop offset="0.000" stop-color="#a9cef8"/><stop offset="0.062" stop-color="#a8cdf7"/><stop offset="0.125" stop-color="#a7cbf5"/><stop offset="0.188" stop-color="#a6caf4"/><stop offset="0.250" stop-color="#9cbee6"/><stop offset="0.312" stop-color="#88a7cb"/><stop offset="0.375" stop-color="#7491b1"/><stop offset="0.438" stop-color="#637c9a"/><stop offset="0.500" stop-color="#526883"/><stop offset="0.562" stop-color="#506781"/><stop offset="0.625" stop-color="#4f657f"/><stop offset="0.688" stop-color="#4d637d"/><stop offset="0.750" stop-color="#4c617b"/><stop offset="0.812" stop-color="#4a5f79"/><stop offset="0.875" stop-color="#495e77"/><stop offset="0.938" stop-color="#536a85"/><stop offset="1.000" stop-color="#657f9d"/></linearGradient>
<path d="M627.7 399.2 L549.1 471.8 L538.6 483.6 L502.1 526.8 Q506.5 554.8 543.6 564.6 L669.2 443.4 Z" fill="url(#g9)"/>
<g clip-path="url(#g8)" stroke="#98bfed" stroke-width="0.78" fill="none" opacity="1.0">
<path d="M473.2 547.5L656.6 371.5M474.0 548.3L657.3 372.3M474.8 549.2L658.1 373.2M475.8 550.3L659.1 374.2M476.9 551.5L660.2 375.4M478.1 552.8L661.4 376.7M479.4 554.2L662.8 378.1M480.9 555.8L664.2 379.6M482.4 557.5L665.7 381.3M484.1 559.2L667.4 383.0M485.8 561.1L669.1 384.8M487.5 563.0L670.8 386.7M489.4 564.9L672.6 388.6M491.2 566.9L674.5 390.6M493.1 568.9L676.4 392.6M495.0 571.0L678.2 394.6M496.9 573.0L680.1 396.5M498.7 575.0L682.0 398.5M500.5 577.0L683.8 400.4M502.3 578.9L685.5 402.3M504.0 580.7L687.2 404.1M505.6 582.5L688.9 405.8M507.2 584.1L690.4 407.5M508.6 585.7L691.8 409.0M510.0 587.2L693.2 410.4M511.2 588.5L694.4 411.7M512.3 589.7L695.5 412.9M513.3 590.7L696.5 413.9M514.1 591.6L697.3 414.8M514.8 592.4L698.0 415.6"/>
</g>
<clipPath id="g10"><ellipse cx="648.5" cy="421.3" rx="29.2" ry="8.4" transform="rotate(46.8 648.5 421.3)"/></clipPath>
<ellipse cx="648.5" cy="421.3" rx="30.3" ry="9.5" transform="rotate(46.8 648.5 421.3)" fill="#5c7594" stroke="#9fc5f2" stroke-width="2.2"/>
<g clip-path="url(#g10)" stroke="#9dc3f0" stroke-width="0.9" opacity="0.95">
<path d="M598.6 419.6L650.2 371.4"/>
<path d="M600.3 421.4L651.9 373.2"/>
<path d="M602.0 423.2L653.6 375.1"/>
<path d="M603.7 425.0L655.3 376.9"/>
<path d="M605.4 426.9L657.0 378.7"/>
<path d="M607.1 428.7L658.8 380.6"/>
<path d="M608.8 430.5L660.5 382.4"/>
<path d="M610.5 432.4L662.2 384.2"/>
<path d="M612.2 434.2L663.9 386.0"/>
<path d="M613.9 436.0L665.6 387.9"/>
<path d="M615.7 437.8L667.3 389.7"/>
<path d="M617.4 439.7L669.0 391.5"/>
<path d="M619.1 441.5L670.7 393.4"/>
<path d="M620.8 443.3L672.4 395.2"/>
<path d="M622.5 445.1L674.1 397.0"/>
<path d="M624.2 447.0L675.8 398.8"/>
<path d="M625.9 448.8L677.5 400.7"/>
<path d="M627.6 450.6L679.2 402.5"/>
<path d="M629.3 452.5L680.9 404.3"/>
<path d="M631.0 454.3L682.6 406.1"/>
<path d="M632.7 456.1L684.3 408.0"/>
<path d="M634.4 457.9L686.0 409.8"/>
<path d="M636.1 459.8L687.7 411.6"/>
<path d="M637.8 461.6L689.4 413.5"/>
<path d="M639.5 463.4L691.1 415.3"/>
<path d="M641.2 465.3L692.9 417.1"/>
<path d="M642.9 467.1L694.6 418.9"/>
<path d="M644.6 468.9L696.3 420.8"/>
<path d="M646.3 470.7L698.0 422.6"/>
</g>
<g transform="translate(653.4 415.4) rotate(41)"><rect x="-21.0" y="-3.8" width="42.0" height="7.6" fill="#e00000"/><rect x="-21.0" y="2.5" width="42.0" height="1.3" fill="#b40000"/></g><g transform="translate(653.4 415.4) rotate(-42)"><rect x="-9.0" y="-3.8" width="18.0" height="7.6" fill="#e00000"/><rect x="-9.0" y="2.5" width="18.0" height="1.3" fill="#b40000"/></g>
<g stroke="#f0c400" fill="none" stroke-linecap="round">
<path d="M503.2 525.9 L534.9 490.3" stroke-width="4"/>
<path d="M534.9 490.3 Q541.9 484.9 537.1 482.3" stroke-width="2.6"/>
<path d="M544.7 563.1 L582.9 527.5" stroke-width="2.6"/>
<path d="M263.9 506.2 L296.0 536.5" stroke-width="4"/>
<path d="M263.9 506.7 Q255.5 500.6 261.0 497.5" stroke-width="2.6"/>
<path d="M220.3 550.3 L253.0 577.0" stroke-width="3.4"/>
</g>
<polygon points="315.0,565.3 309.1,571.4 300.5,569.7 297.8,562.0 303.7,556.0 312.3,557.6" fill="#6a5600" stroke="#f0c400" stroke-width="1"/><polygon points="313.4,565.0 308.6,570.0 301.6,568.6 299.3,562.3 304.2,557.4 311.2,558.7" fill="#000" stroke="#f0c400" stroke-width="1"/>
<polygon points="289.5,588.4 283.6,594.4 275.0,592.7 272.3,585.0 278.2,579.0 286.8,580.7" fill="#6a5600" stroke="#f0c400" stroke-width="1"/><polygon points="288.0,588.1 283.1,593.0 276.1,591.6 273.9,585.3 278.7,580.4 285.7,581.8" fill="#000" stroke="#f0c400" stroke-width="1"/>
<polygon points="501.4,557.1 494.6,563.1 485.9,560.3 484.0,551.5 490.8,545.5 499.5,548.3" fill="#3a2f00" stroke="#f0c400" stroke-width="1.3" stroke-linejoin="round"/><polygon points="498.6,557.7 494.3,561.5 488.8,559.7 487.6,554.1 491.9,550.3 497.4,552.1" fill="#0c0900" stroke="#e6b900" stroke-width="0.8"/><circle cx="493.2" cy="556.9" r="4.8" fill="#8f7500"/>
<polygon points="526.0,578.4 519.2,584.4 510.5,581.6 508.6,572.8 515.4,566.8 524.1,569.6" fill="#3a2f00" stroke="#f0c400" stroke-width="1.3" stroke-linejoin="round"/><polygon points="523.2,579.0 518.9,582.8 513.4,581.0 512.2,575.4 516.5,571.6 522.0,573.4" fill="#0c0900" stroke="#e6b900" stroke-width="0.8"/><circle cx="517.8" cy="578.2" r="4.8" fill="#8f7500"/>
<clipPath id="g11"><path d="M337.6 314.7 L351.4 491.6 A31.4 9.5 -5.4 0 0 414.0 485.7 L399.9 314.7 A31.1 6.5 180.0 0 0 337.6 314.7 Z"/></clipPath>
<linearGradient id="g12" gradientUnits="userSpaceOnUse" x1="344.6" y1="404.2" x2="406.9" y2="399.2"><stop offset="0.000" stop-color="#a5c9f3"/><stop offset="0.062" stop-color="#a4c9f2"/><stop offset="0.125" stop-color="#a4c8f1"/><stop offset="0.188" stop-color="#a3c7f0"/><stop offset="0.250" stop-color="#a2c6ef"/><stop offset="0.312" stop-color="#a1c5ee"/><stop offset="0.375" stop-color="#91b2d8"/><stop offset="0.438" stop-color="#7f9dc0"/><stop offset="0.500" stop-color="#6e89a9"/><stop offset="0.562" stop-color="#5e7693"/><stop offset="0.625" stop-color="#536a84"/><stop offset="0.688" stop-color="#506781"/><stop offset="0.750" stop-color="#4e647e"/><stop offset="0.812" stop-color="#4c627b"/><stop offset="0.875" stop-color="#4a5f78"/><stop offset="0.938" stop-color="#4e647f"/><stop offset="1.000" stop-color="#657f9d"/></linearGradient>
<path d="M337.6 314.7 L351.4 491.6 A31.4 9.5 -5.4 0 0 414.0 485.7 L399.9 314.7 A31.1 6.5 180.0 0 0 337.6 314.7 Z" fill="url(#g12)"/>
<g clip-path="url(#g11)" stroke="#98bfed" stroke-width="0.78" fill="none" opacity="1.0">
<path d="M334.5 274.8L354.5 531.5M335.6 274.8L355.6 531.4M336.8 274.8L356.9 531.3M338.3 274.8L358.3 531.1M339.9 274.8L360.0 531.0M341.8 274.8L361.9 530.8M343.8 274.8L363.9 530.6M345.9 274.8L366.1 530.4M348.2 274.8L368.4 530.2M350.7 274.8L370.9 529.9M353.2 274.8L373.4 529.7M355.9 274.8L376.1 529.4M358.6 274.8L378.8 529.2M361.3 274.8L381.6 528.9M364.1 274.8L384.5 528.7M367.0 274.8L387.3 528.4M369.8 274.8L390.2 528.1M372.5 274.8L393.0 527.9M375.2 274.8L395.7 527.6M377.9 274.8L398.4 527.3M380.4 274.8L400.9 527.1M382.9 274.8L403.4 526.9M385.2 274.8L405.7 526.7M387.3 274.8L407.9 526.4M389.3 274.8L409.9 526.3M391.2 274.8L411.8 526.1M392.8 274.8L413.5 525.9M394.3 274.8L414.9 525.8M395.5 274.8L416.2 525.7M396.6 274.8L417.3 525.6"/>
</g>
<clipPath id="g13"><ellipse cx="382.7" cy="488.6" rx="30.5" ry="8.3" transform="rotate(-5.4 382.7 488.6)"/></clipPath>
<ellipse cx="382.7" cy="488.6" rx="31.4" ry="9.2" transform="rotate(-5.4 382.7 488.6)" fill="#5f7998" stroke="#9fc5f2" stroke-width="1.8"/>
<g clip-path="url(#g13)" stroke="#9dc3f0" stroke-width="0.9" opacity="0.95">
<path d="M416.5 449.8L421.6 522.5"/>
<path d="M414.0 449.9L419.1 522.6"/>
<path d="M411.5 450.1L416.6 522.8"/>
<path d="M409.0 450.3L414.1 523.0"/>
<path d="M406.5 450.5L411.6 523.2"/>
<path d="M404.0 450.6L409.1 523.3"/>
<path d="M401.5 450.8L406.6 523.5"/>
<path d="M399.1 451.0L404.1 523.7"/>
<path d="M396.6 451.2L401.6 523.9"/>
<path d="M394.1 451.3L399.1 524.0"/>
<path d="M391.6 451.5L396.7 524.2"/>
<path d="M389.1 451.7L394.2 524.4"/>
<path d="M386.6 451.9L391.7 524.6"/>
<path d="M384.1 452.0L389.2 524.7"/>
<path d="M381.6 452.2L386.7 524.9"/>
<path d="M379.1 452.4L384.2 525.1"/>
<path d="M376.6 452.5L381.7 525.2"/>
<path d="M374.1 452.7L379.2 525.4"/>
<path d="M371.6 452.9L376.7 525.6"/>
<path d="M369.1 453.1L374.2 525.8"/>
<path d="M366.6 453.2L371.7 525.9"/>
<path d="M364.1 453.4L369.2 526.1"/>
<path d="M361.6 453.6L366.7 526.3"/>
<path d="M359.1 453.8L364.2 526.5"/>
<path d="M356.7 453.9L361.7 526.6"/>
<path d="M354.2 454.1L359.2 526.8"/>
<path d="M351.7 454.3L356.8 527.0"/>
<path d="M349.2 454.5L354.3 527.2"/>
<path d="M346.7 454.6L351.8 527.3"/>
<path d="M344.2 454.8L349.3 527.5"/>
</g>
<path d="M347.5 312.5 L347.5 308.6 L362 306.8 L363 304 L374 304 L375 306.8 L388.5 307.6 L388.5 311.5 Q368 307.5 347.5 312.5Z" fill="#ee0a0a"/>
<path d="M371.3 487 L371.3 436 Q372 428 383 428 Q394.6 428 394.6 437 L394.6 503 L378 503 Z" fill="#2b478a" stroke="#f0c400" stroke-width="1.4"/>
<path d="M378 503 L378 445 Q380 436 386 441 L394 470 L394.6 503Z" fill="#263f7b"/>
<path d="M380 452 l2 5 l-1 3z" fill="#fff"/>
<rect x="366" y="502" width="14" height="6" fill="#b08c00"/><rect x="402" y="501" width="10" height="5" fill="#b08c00"/>
<path d="M372 487 Q383 496 394.6 492 L394.6 503 L372 503Z" fill="#2b478a"/>
<clipPath id="g14"><path d="M352.4 521 A44.8 18 0 0 1 442 521 L442 820 A44.8 18 0 0 1 352.4 822.5 Z"/></clipPath>
<linearGradient id="g15" x1="352" x2="442" y1="0" y2="0" gradientUnits="userSpaceOnUse"><stop offset="0" stop-color="#f47c2a"/><stop offset="0.28" stop-color="#ee7424"/><stop offset="0.42" stop-color="#bd5816"/><stop offset="0.6" stop-color="#8c4010"/><stop offset="0.8" stop-color="#964511"/><stop offset="0.93" stop-color="#d4641c"/><stop offset="1" stop-color="#f37a28"/></linearGradient>
<path d="M354.5 832 L401.2 850.5 L421 839.6 L441 826 L441 815 L354.5 815Z" fill="#f01000"/>
<path d="M401.2 850.5 L421 839.6 L413 838 L401 845.5 Z" fill="#a80000"/>
<path d="M352.4 521 A44.8 18 0 0 1 442 521 L442 820 A44.8 18 0 0 1 352.4 822.5 Z" fill="url(#g15)"/>
<g clip-path="url(#g14)" stroke-width="0.95">
<path d="M352.4 500L352.4 845" stroke="#b9540f" opacity="0.75"/>
<path d="M353.6 500L353.6 845" stroke="#b9540f" opacity="0.75"/>
<path d="M355.1 500L355.1 845" stroke="#b9540f" opacity="0.75"/>
<path d="M356.7 500L356.7 845" stroke="#b9540f" opacity="0.75"/>
<path d="M358.7 500L358.7 845" stroke="#b9540f" opacity="0.75"/>
<path d="M360.8 500L360.8 845" stroke="#b9540f" opacity="0.75"/>
<path d="M363.2 500L363.2 845" stroke="#b9540f" opacity="0.75"/>
<path d="M365.8 500L365.8 845" stroke="#b9540f" opacity="0.75"/>
<path d="M368.5 500L368.5 845" stroke="#b9540f" opacity="0.75"/>
<path d="M371.5 500L371.5 845" stroke="#b9540f" opacity="0.75"/>
<path d="M374.5 500L374.5 845" stroke="#b9540f" opacity="0.75"/>
<path d="M377.8 500L377.8 845" stroke="#b9540f" opacity="0.75"/>
<path d="M381.1 500L381.1 845" stroke="#b9540f" opacity="0.75"/>
<path d="M384.6 500L384.6 845" stroke="#b9540f" opacity="0.75"/>
<path d="M388.1 500L388.1 845" stroke="#f6802c" opacity="0.95"/>
<path d="M391.7 500L391.7 845" stroke="#f6802c" opacity="0.95"/>
<path d="M395.4 500L395.4 845" stroke="#f6802c" opacity="0.95"/>
<path d="M399.0 500L399.0 845" stroke="#f6802c" opacity="0.95"/>
<path d="M402.7 500L402.7 845" stroke="#f6802c" opacity="0.95"/>
<path d="M406.3 500L406.3 845" stroke="#f6802c" opacity="0.95"/>
<path d="M409.8 500L409.8 845" stroke="#f6802c" opacity="0.95"/>
<path d="M413.3 500L413.3 845" stroke="#f6802c" opacity="0.95"/>
<path d="M416.6 500L416.6 845" stroke="#f6802c" opacity="0.95"/>
<path d="M419.9 500L419.9 845" stroke="#f6802c" opacity="0.95"/>
<path d="M422.9 500L422.9 845" stroke="#f6802c" opacity="0.95"/>
<path d="M425.9 500L425.9 845" stroke="#f6802c" opacity="0.95"/>
<path d="M428.6 500L428.6 845" stroke="#f6802c" opacity="0.95"/>
<path d="M431.2 500L431.2 845" stroke="#f6802c" opacity="0.95"/>
<path d="M433.6 500L433.6 845" stroke="#f6802c" opacity="0.95"/>
<path d="M435.7 500L435.7 845" stroke="#f6802c" opacity="0.95"/>
<path d="M437.7 500L437.7 845" stroke="#f6802c" opacity="0.95"/>
<path d="M439.3 500L439.3 845" stroke="#f6802c" opacity="0.95"/>
<path d="M440.8 500L440.8 845" stroke="#f6802c" opacity="0.95"/>
<path d="M442.0 500L442.0 845" stroke="#f6802c" opacity="0.95"/>
</g>
<ellipse cx="397.2" cy="521.5" rx="44.8" ry="17.5" fill="#ee6f22"/>
<clipPath id="g16"><ellipse cx="399.3" cy="523.5" rx="30.8" ry="15"/></clipPath>
<ellipse cx="399.3" cy="523.5" rx="30.8" ry="15" fill="#a04a12"/>
<g clip-path="url(#g16)" stroke="#f07a28" stroke-width="0.9" opacity="0.95">
<path d="M368.0 510L368.0 542"/>
<path d="M370.3 510L370.3 542"/>
<path d="M372.6 510L372.6 542"/>
<path d="M374.9 510L374.9 542"/>
<path d="M377.2 510L377.2 542"/>
<path d="M379.5 510L379.5 542"/>
<path d="M381.8 510L381.8 542"/>
<path d="M384.1 510L384.1 542"/>
<path d="M386.4 510L386.4 542"/>
<path d="M388.7 510L388.7 542"/>
<path d="M391.0 510L391.0 542"/>
<path d="M393.3 510L393.3 542"/>
<path d="M395.6 510L395.6 542"/>
<path d="M397.9 510L397.9 542"/>
<path d="M400.2 510L400.2 542"/>
<path d="M402.5 510L402.5 542"/>
<path d="M404.8 510L404.8 542"/>
<path d="M407.1 510L407.1 542"/>
<path d="M409.4 510L409.4 542"/>
<path d="M411.7 510L411.7 542"/>
<path d="M414.0 510L414.0 542"/>
<path d="M416.3 510L416.3 542"/>
<path d="M418.6 510L418.6 542"/>
<path d="M420.9 510L420.9 542"/>
<path d="M423.2 510L423.2 542"/>
<path d="M425.5 510L425.5 542"/>
<path d="M427.8 510L427.8 542"/>
<path d="M430.1 510L430.1 542"/>
</g>
<g stroke="#f9a060" stroke-width="0.7" opacity="0.75">
<path d="M430.1 523.5L442.0 521.5"/>
<path d="M430.0 525.0L441.8 523.2"/>
<path d="M429.5 526.4L441.1 524.9"/>
<path d="M428.8 527.9L440.1 526.6"/>
<path d="M427.8 529.2L438.6 528.2"/>
<path d="M426.5 530.6L436.7 529.7"/>
<path d="M424.9 531.8L434.4 531.2"/>
<path d="M423.1 533.0L431.8 532.6"/>
<path d="M421.1 534.1L428.9 533.9"/>
<path d="M418.8 535.1L425.6 535.0"/>
<path d="M416.4 536.0L422.1 536.1"/>
<path d="M413.8 536.7L418.3 536.9"/>
<path d="M411.1 537.4L414.3 537.7"/>
<path d="M408.2 537.9L410.2 538.2"/>
<path d="M405.3 538.2L405.9 538.7"/>
<path d="M402.3 538.4L401.6 538.9"/>
<path d="M399.3 538.5L397.2 539.0"/>
<path d="M396.3 538.4L392.8 538.9"/>
<path d="M393.3 538.2L388.5 538.7"/>
<path d="M390.4 537.9L384.2 538.2"/>
<path d="M387.5 537.4L380.1 537.7"/>
<path d="M384.8 536.7L376.1 536.9"/>
<path d="M382.2 536.0L372.3 536.1"/>
<path d="M379.8 535.1L368.8 535.0"/>
<path d="M377.5 534.1L365.5 533.9"/>
<path d="M375.5 533.0L362.6 532.6"/>
<path d="M373.7 531.8L360.0 531.2"/>
<path d="M372.1 530.6L357.7 529.7"/>
<path d="M370.8 529.2L355.8 528.2"/>
<path d="M369.8 527.9L354.3 526.6"/>
<path d="M369.1 526.4L353.3 524.9"/>
<path d="M368.6 525.0L352.6 523.2"/>
<path d="M368.5 523.5L352.4 521.5"/>
<path d="M368.6 522.0L352.6 519.8"/>
<path d="M369.1 520.6L353.3 518.1"/>
<path d="M369.8 519.1L354.3 516.4"/>
<path d="M370.8 517.8L355.8 514.8"/>
<path d="M372.1 516.4L357.7 513.3"/>
<path d="M373.7 515.2L360.0 511.8"/>
<path d="M375.5 514.0L362.6 510.4"/>
<path d="M377.5 512.9L365.5 509.1"/>
<path d="M379.8 511.9L368.8 508.0"/>
<path d="M382.2 511.0L372.3 506.9"/>
<path d="M384.8 510.3L376.1 506.1"/>
<path d="M387.5 509.6L380.1 505.3"/>
<path d="M390.4 509.1L384.2 504.8"/>
<path d="M393.3 508.8L388.5 504.3"/>
<path d="M396.3 508.6L392.8 504.1"/>
<path d="M399.3 508.5L397.2 504.0"/>
<path d="M402.3 508.6L401.6 504.1"/>
<path d="M405.3 508.8L405.9 504.3"/>
<path d="M408.2 509.1L410.2 504.8"/>
<path d="M411.1 509.6L414.3 505.3"/>
<path d="M413.8 510.3L418.3 506.1"/>
<path d="M416.4 511.0L422.1 506.9"/>
<path d="M418.8 511.9L425.6 508.0"/>
<path d="M421.1 512.9L428.9 509.1"/>
<path d="M423.1 514.0L431.8 510.4"/>
<path d="M424.9 515.2L434.4 511.8"/>
<path d="M426.5 516.4L436.7 513.3"/>
<path d="M427.8 517.8L438.6 514.8"/>
<path d="M428.8 519.1L440.1 516.4"/>
<path d="M429.5 520.6L441.1 518.1"/>
<path d="M430.0 522.0L441.8 519.8"/>
</g>
<polygon points="307.6,620.6 365.3,589.6 372.6,591.5 312.4,625.5" fill="#2a4685" />
<polygon points="310.0,626.2 372.6,591.5 372.6,650.2 344.0,667.2 310.0,649.7" fill="#161f48" />
<polygon points="346.4,579.4 354.2,579.9 354.2,596.9 346.4,594.5" fill="#e0b400" />
<polygon points="344.0,667.2 354.9,661.4 354.9,671.6 345.2,674.0" fill="#d4a900" />
<g transform="translate(341.9 634.2) scale(1.17) translate(-341.9 -634.2)"><ellipse cx="347.1" cy="635.4" rx="5.4" ry="5.8" fill="#c39b00"/><ellipse cx="348.5" cy="635.8" rx="3.6" ry="4.6" fill="#8f7200" opacity="0.7"/><path d="M334.5 631.2 Q335.4 625.6 339.9 625.6 L345.3 627.8 L345.3 641.8 L339.4 642.6 Q334.9 641.2 334.5 637.2 Z" fill="#e8bc00"/><polygon points="336.7,628.4 341.3,627.4 343.1,630.0 338.3,632.0" fill="#171100" /><polygon points="336.5,633.8 340.7,632.8 340.7,639.4 336.5,638.8" fill="#171100" /><polygon points="342.1,632.4 344.5,631.4 344.5,639.6 342.1,639.8" fill="#caa100" /></g>
<g transform="translate(345.5 658.3) scale(1.17) translate(-345.5 -658.3)"><ellipse cx="350.7" cy="659.5" rx="5.4" ry="5.8" fill="#c39b00"/><ellipse cx="352.1" cy="659.9" rx="3.6" ry="4.6" fill="#8f7200" opacity="0.7"/><path d="M338.1 655.3 Q339.0 649.7 343.5 649.7 L348.9 651.9 L348.9 665.9 L343.0 666.7 Q338.5 665.3 338.1 661.3 Z" fill="#e8bc00"/><polygon points="340.3,652.5 344.9,651.5 346.7,654.1 341.9,656.1" fill="#171100" /><polygon points="340.1,657.9 344.3,656.9 344.3,663.5 340.1,662.9" fill="#171100" /><polygon points="345.7,656.5 348.1,655.5 348.1,663.7 345.7,663.9" fill="#caa100" /></g>
<g transform="translate(357.9 625.1) scale(1.17) translate(-357.9 -625.1)"><ellipse cx="363.1" cy="626.3" rx="5.4" ry="5.8" fill="#c39b00"/><ellipse cx="364.5" cy="626.7" rx="3.6" ry="4.6" fill="#8f7200" opacity="0.7"/><path d="M350.5 622.1 Q351.4 616.5 355.9 616.5 L361.3 618.7 L361.3 632.7 L355.4 633.5 Q350.9 632.1 350.5 628.1 Z" fill="#e8bc00"/><polygon points="352.7,619.3 357.3,618.3 359.1,620.9 354.3,622.9" fill="#171100" /><polygon points="352.5,624.7 356.7,623.7 356.7,630.3 352.5,629.7" fill="#171100" /><polygon points="358.1,623.3 360.5,622.3 360.5,630.5 358.1,630.7" fill="#caa100" /></g>
<g transform="translate(357.9 648.5) scale(1.17) translate(-357.9 -648.5)"><ellipse cx="363.1" cy="649.7" rx="5.4" ry="5.8" fill="#c39b00"/><ellipse cx="364.5" cy="650.1" rx="3.6" ry="4.6" fill="#8f7200" opacity="0.7"/><path d="M350.5 645.5 Q351.4 639.9 355.9 639.9 L361.3 642.1 L361.3 656.1 L355.4 656.9 Q350.9 655.5 350.5 651.5 Z" fill="#e8bc00"/><polygon points="352.7,642.7 357.3,641.7 359.1,644.3 354.3,646.3" fill="#171100" /><polygon points="352.5,648.1 356.7,647.1 356.7,653.7 352.5,653.1" fill="#171100" /><polygon points="358.1,646.7 360.5,645.7 360.5,653.9 358.1,654.1" fill="#caa100" /></g>
<polygon points="443.4,593.5 505.2,604.9 483.4,627.9 479.8,667.2 443.4,649.7" fill="#28407e" />
<polygon points="443.4,593.5 449.4,590.3 506.4,604.2 505.2,606.1" fill="#2a4685" />
<polygon points="442.2,649.7 449.4,653.4 449.4,664.3 442.9,667.2" fill="#d4a900" />
<polygon points="462.0,623.3 455.7,628.3 448.0,625.6 446.6,618.0 452.9,613.0 460.6,615.6" fill="#6a5600" stroke="#f0c400" stroke-width="1"/><polygon points="460.5,622.8 455.4,626.8 449.2,624.7 448.1,618.5 453.2,614.5 459.4,616.6" fill="#1a1400" stroke="#f0c400" stroke-width="1"/>
<polygon points="483.3,629.9 477.1,634.9 469.4,632.2 467.9,624.5 474.2,619.5 481.9,622.2" fill="#6a5600" stroke="#f0c400" stroke-width="1"/><polygon points="481.8,629.3 476.8,633.4 470.6,631.2 469.4,625.0 474.5,621.0 480.7,623.2" fill="#1a1400" stroke="#f0c400" stroke-width="1"/>
<polygon points="462.0,646.3 455.7,651.3 448.0,648.7 446.6,641.0 452.9,636.0 460.6,638.7" fill="#6a5600" stroke="#f0c400" stroke-width="1"/><polygon points="460.5,645.8 455.4,649.9 449.2,647.7 448.1,641.5 453.2,637.5 459.4,639.6" fill="#1a1400" stroke="#f0c400" stroke-width="1"/>
<polygon points="482.6,652.9 476.3,657.9 468.6,655.2 467.2,647.6 473.5,642.6 481.2,645.2" fill="#6a5600" stroke="#f0c400" stroke-width="1"/><polygon points="481.1,652.4 476.1,656.4 469.9,654.3 468.7,648.1 473.8,644.0 480.0,646.2" fill="#1a1400" stroke="#f0c400" stroke-width="1"/>
<clipPath id="g17"><path d="M187.4 681.7 L305.8 615.4 A32.7 19.0 54.6 0 1 343.7 668.7 L208.7 752.8 Z"/></clipPath>
<linearGradient id="g18" gradientUnits="userSpaceOnUse" x1="243.9" y1="650.2" x2="278.9" y2="709.1"><stop offset="0.000" stop-color="#a9cef8"/><stop offset="0.062" stop-color="#a2c6ef"/><stop offset="0.125" stop-color="#7d9bbe"/><stop offset="0.188" stop-color="#5f7895"/><stop offset="0.250" stop-color="#5d7592"/><stop offset="0.312" stop-color="#5a728e"/><stop offset="0.375" stop-color="#576f8a"/><stop offset="0.438" stop-color="#546c87"/><stop offset="0.500" stop-color="#526883"/><stop offset="0.562" stop-color="#506781"/><stop offset="0.625" stop-color="#4f657f"/><stop offset="0.688" stop-color="#4d637d"/><stop offset="0.750" stop-color="#4c617b"/><stop offset="0.812" stop-color="#4a5f79"/><stop offset="0.875" stop-color="#495e77"/><stop offset="0.938" stop-color="#4f6580"/><stop offset="1.000" stop-color="#5b7490"/></linearGradient>
<path d="M187.4 681.7 L305.8 615.4 A32.7 19.0 54.6 0 1 343.7 668.7 L208.7 752.8 Z" fill="url(#g18)"/>
<g clip-path="url(#g17)" stroke="#98bfed" stroke-width="0.78" fill="none" opacity="1.0">
<path d="M152.5 701.2L340.7 595.9M152.9 702.4L341.3 596.7M153.3 703.9L342.0 597.7M153.8 705.5L342.9 598.9M154.4 707.4L343.8 600.2M155.0 709.4L344.8 601.6M155.7 711.6L346.0 603.2M156.4 714.1L347.2 604.9M157.2 716.6L348.5 606.7M158.0 719.4L349.9 608.6M158.9 722.2L351.3 610.7M159.8 725.2L352.8 612.8M160.8 728.2L354.3 614.9M161.7 731.3L355.9 617.1M162.7 734.5L357.5 619.4M163.7 737.7L359.1 621.6M164.6 740.8L360.8 623.9M165.6 744.0L362.4 626.1M166.5 747.1L364.0 628.4M167.5 750.2L365.5 630.5M168.4 753.1L367.0 632.6M169.2 755.9L368.5 634.7M170.1 758.7L369.8 636.6M170.9 761.2L371.1 638.4M171.6 763.6L372.4 640.2M172.3 765.8L373.5 641.7M172.9 767.9L374.5 643.2M173.5 769.7L375.5 644.5M174.0 771.3L376.3 645.7M174.4 772.8L377.0 646.7M174.7 774.0L377.7 647.5"/>
</g>
<linearGradient id="gEin" gradientUnits="userSpaceOnUse" x1="178" y1="742" x2="218" y2="694"><stop offset="0" stop-color="#9ec4f0"/><stop offset="0.35" stop-color="#86a8d2"/><stop offset="0.7" stop-color="#5d7795"/><stop offset="1" stop-color="#546d8a"/></linearGradient>
<clipPath id="g19"><ellipse cx="198.1" cy="717.2" rx="35.2" ry="27.6" transform="rotate(73.3 198.1 717.2)"/></clipPath>
<ellipse cx="198.1" cy="717.2" rx="37.1" ry="29.5" transform="rotate(73.3 198.1 717.2)" fill="url(#gEin)" stroke="#9fc5f2" stroke-width="3.8"/>
<g clip-path="url(#g19)" stroke="#9dc3f0" stroke-width="0.9" opacity="0.95">
<path d="M140.3 702.8L212.5 659.5"/>
<path d="M141.6 705.0L213.7 661.6"/>
<path d="M142.8 707.1L215.0 663.8"/>
<path d="M144.1 709.3L216.3 665.9"/>
<path d="M145.4 711.4L217.6 668.0"/>
<path d="M146.7 713.6L218.9 670.2"/>
<path d="M148.0 715.7L220.2 672.3"/>
<path d="M149.3 717.8L221.5 674.5"/>
<path d="M150.6 720.0L222.8 676.6"/>
<path d="M151.9 722.1L224.0 678.8"/>
<path d="M153.1 724.3L225.3 680.9"/>
<path d="M154.4 726.4L226.6 683.0"/>
<path d="M155.7 728.6L227.9 685.2"/>
<path d="M157.0 730.7L229.2 687.3"/>
<path d="M158.3 732.8L230.5 689.5"/>
<path d="M159.6 735.0L231.8 691.6"/>
<path d="M160.9 737.1L233.1 693.8"/>
<path d="M162.2 739.3L234.3 695.9"/>
<path d="M163.4 741.4L235.6 698.0"/>
<path d="M164.7 743.6L236.9 700.2"/>
<path d="M166.0 745.7L238.2 702.3"/>
<path d="M167.3 747.8L239.5 704.5"/>
<path d="M168.6 750.0L240.8 706.6"/>
<path d="M169.9 752.1L242.1 708.8"/>
<path d="M171.2 754.3L243.4 710.9"/>
<path d="M172.5 756.4L244.6 713.0"/>
<path d="M173.7 758.6L245.9 715.2"/>
<path d="M175.0 760.7L247.2 717.3"/>
<path d="M176.3 762.8L248.5 719.5"/>
<path d="M177.6 765.0L249.8 721.6"/>
<path d="M178.9 767.1L251.1 723.8"/>
<path d="M180.2 769.3L252.4 725.9"/>
<path d="M181.5 771.4L253.7 728.0"/>
<path d="M182.8 773.6L254.9 730.2"/>
</g>
<ellipse cx="198" cy="717.2" rx="37" ry="29.5" transform="rotate(73.3 198 717.2)" fill="none" stroke="#6f8fb8" stroke-width="3" stroke-dasharray="0.7 1.5" opacity="0.8"/>
<g transform="translate(192.8 720.4) rotate(21)"><rect x="-22.0" y="-5.2" width="44.0" height="10.4" fill="#ee0a0a"/><rect x="-22.0" y="3.9" width="44.0" height="1.3" fill="#b40000"/></g><g transform="translate(192.8 720.4) rotate(90)"><rect x="-23.5" y="-5.2" width="47.0" height="10.4" fill="#ee0a0a"/><rect x="-23.5" y="3.9" width="47.0" height="1.3" fill="#b40000"/></g>
<clipPath id="g20"><path d="M507.1 605.0 L657.7 658.6 L642.3 730.0 L484.2 671.3 A35.1 17.0 -70.9 0 1 507.1 605.0 Z"/></clipPath>
<linearGradient id="g21" gradientUnits="userSpaceOnUse" x1="585.0" y1="632.7" x2="560.6" y2="699.7"><stop offset="0.000" stop-color="#a3c7f0"/><stop offset="0.062" stop-color="#a4c8f1"/><stop offset="0.125" stop-color="#a5c9f3"/><stop offset="0.188" stop-color="#a6caf4"/><stop offset="0.250" stop-color="#a7cbf5"/><stop offset="0.312" stop-color="#a8cdf6"/><stop offset="0.375" stop-color="#a9cef8"/><stop offset="0.438" stop-color="#a7cbf5"/><stop offset="0.500" stop-color="#a3c7f0"/><stop offset="0.562" stop-color="#a0c3eb"/><stop offset="0.625" stop-color="#98bae1"/><stop offset="0.688" stop-color="#8babcf"/><stop offset="0.750" stop-color="#7d9bbe"/><stop offset="0.812" stop-color="#6d88a8"/><stop offset="0.875" stop-color="#5d7592"/><stop offset="0.938" stop-color="#5c7491"/><stop offset="1.000" stop-color="#657f9d"/></linearGradient>
<path d="M507.1 605.0 L657.7 658.6 L642.3 730.0 L484.2 671.3 A35.1 17.0 -70.9 0 1 507.1 605.0 Z" fill="url(#g21)"/>
<g clip-path="url(#g20)" stroke="#8fb6e6" stroke-width="0.78" fill="none" opacity="1.0">
<path d="M469.4 591.6L695.4 672.0M469.0 592.7L695.1 673.2M468.6 594.0L694.8 674.6M468.1 595.4L694.5 676.2M467.5 597.1L694.1 678.0M466.9 598.9L693.6 680.1M466.2 601.0L693.2 682.3M465.4 603.1L692.6 684.6M464.6 605.5L692.1 687.2M463.8 607.9L691.5 689.9M462.9 610.5L690.9 692.7M462.0 613.2L690.3 695.6M461.0 615.9L689.6 698.6M460.0 618.7L688.9 701.7M459.1 621.6L688.3 704.8M458.1 624.5L687.6 708.0M457.1 627.4L686.9 711.1M456.1 630.2L686.2 714.2M455.1 633.0L685.6 717.3M454.2 635.8L684.9 720.3M453.2 638.5L684.3 723.3M452.3 641.0L683.7 726.1M451.5 643.5L683.1 728.8M450.7 645.8L682.5 731.3M449.9 648.0L682.0 733.7M449.2 650.0L681.5 735.9M448.6 651.9L681.1 737.9M448.0 653.5L680.7 739.7M447.5 655.0L680.4 741.3M447.1 656.3L680.1 742.7M446.7 657.4L679.8 743.9"/>
</g>
<clipPath id="g22"><ellipse cx="650.0" cy="694.3" rx="35.0" ry="20.5" transform="rotate(102.2 650.0 694.3)"/></clipPath>
<ellipse cx="650.0" cy="694.3" rx="36.5" ry="22.0" transform="rotate(102.2 650.0 694.3)" fill="#9ec4ef" stroke="#9cc3f0" stroke-width="3"/>
<ellipse cx="650" cy="694.3" rx="33.6" ry="19.4" transform="rotate(102.2 650 694.3)" fill="#9fc5f2" stroke="#2d4463" stroke-width="2" stroke-dasharray="1.3 1.5" opacity="0.9"/>
<clipPath id="g23"><ellipse cx="650" cy="694.3" rx="32.4" ry="18.2" transform="rotate(102.2 650 694.3)"/></clipPath>
<g clip-path="url(#g23)" stroke="#58728f" stroke-width="1.1" opacity="0.55">
<path d="M625 653.0 L680 672.5"/>
<path d="M625 655.6 L680 675.1"/>
<path d="M625 658.2 L680 677.7"/>
<path d="M625 660.8 L680 680.3"/>
<path d="M625 663.4 L680 682.9"/>
<path d="M625 666.0 L680 685.5"/>
<path d="M625 668.6 L680 688.1"/>
<path d="M625 671.2 L680 690.7"/>
<path d="M625 673.8 L680 693.3"/>
</g>
<g stroke="#ff1010" stroke-width="1.3" stroke-linejoin="round">
<g transform="translate(657.4 697.2) rotate(-25.5)"><rect x="-19" y="-4.3" width="38" height="8.6" fill="#740000"/></g>
<rect x="652.4" y="673.6" width="9.8" height="47" fill="#740000"/>
<rect x="652.4" y="673.6" width="3.6" height="47" fill="#e80000" stroke="none"/>
</g>
<polygon points="409.9,622.6 427.6,620.6 419.1,649.7 409.9,683.2 399.3,681.7 403.4,649.7" fill="#1a2a58" />
<polygon points="407.7,623.5 414.8,622.6 404.1,681.7 398.5,680.3" fill="#2a4685" />
<polygon points="387.6,625.0 397.8,626.0 397.3,686.6 389.1,683.2" fill="#dcae00" />
<polygon points="409.9,678.8 416.2,661.9 417.2,681.7 411.4,686.6" fill="#dcae00" />
<polygon points="387.6,625.0 390.0,635.2 399.7,635.2 405.1,625.5" fill="#0c0c0c" />
<clipPath id="g24"><path d="M396.0 553.0 L381.8 601.0 A33.9 25.0 3.8 0 0 449.5 605.5 L458.6 553.0 Z"/></clipPath>
<linearGradient id="g25" gradientUnits="userSpaceOnUse" x1="390.3" y1="570.9" x2="452.6" y2="585.3"><stop offset="0.000" stop-color="#7896b7"/><stop offset="0.062" stop-color="#6a85a4"/><stop offset="0.125" stop-color="#5c7591"/><stop offset="0.188" stop-color="#556d88"/><stop offset="0.250" stop-color="#536a85"/><stop offset="0.312" stop-color="#516882"/><stop offset="0.375" stop-color="#4f6580"/><stop offset="0.438" stop-color="#4d637d"/><stop offset="0.500" stop-color="#4b617a"/><stop offset="0.562" stop-color="#495e78"/><stop offset="0.625" stop-color="#495e77"/><stop offset="0.688" stop-color="#4b607a"/><stop offset="0.750" stop-color="#4d637c"/><stop offset="0.812" stop-color="#4f657f"/><stop offset="0.875" stop-color="#516782"/><stop offset="0.938" stop-color="#5d7592"/><stop offset="1.000" stop-color="#6f8aaa"/></linearGradient>
<path d="M396.0 553.0 L381.8 601.0 A33.9 25.0 3.8 0 0 449.5 605.5 L458.6 553.0 Z" fill="url(#g25)"/>
<g clip-path="url(#g24)" stroke="#98bfed" stroke-width="0.78" fill="none" opacity="1.0">
<path d="M407.3 514.6L370.5 639.4M408.5 514.6L371.9 639.5M409.9 514.6L373.7 639.6M411.6 514.5L375.8 639.8M413.5 514.5L378.1 640.0M415.6 514.5L380.8 640.2M417.9 514.4L383.7 640.4M420.4 514.3L386.8 640.7M423.1 514.3L390.1 640.9M425.9 514.2L393.6 641.2M428.8 514.2L397.2 641.5M431.8 514.1L400.9 641.8M434.8 514.1L404.7 642.1M437.9 514.0L408.5 642.4M440.9 514.0L412.3 642.7M443.9 513.9L416.0 642.9M446.8 513.9L419.6 643.2M449.6 513.8L423.1 643.5M452.3 513.8L426.4 643.7M454.8 513.7L429.5 643.9M457.1 513.7L432.4 644.2M459.3 513.7L435.0 644.4M461.2 513.6L437.4 644.5M462.8 513.6L439.5 644.7M464.3 513.6L441.2 644.8M465.4 513.6L442.7 644.9"/>
</g>
<path d="M404.6 619.4 L409.4 616.3 L431.3 616.3 L427.6 621.9 L409.9 623.1 L403.4 632.8" stroke="#f0c400" stroke-width="2.2" fill="none"/>
<clipPath id="g26"><ellipse cx="427.4" cy="551.0" rx="29.7" ry="28.3" transform="rotate(0.0 427.4 551.0)"/></clipPath>
<ellipse cx="427.4" cy="551.0" rx="30.9" ry="29.5" transform="rotate(0.0 427.4 551.0)" fill="#66819f" stroke="#9fc5f2" stroke-width="2.4"/>
<g clip-path="url(#g26)" stroke="#9dc3f0" stroke-width="0.9" opacity="0.95">
<path d="M470.0 523.3L455.1 593.6"/>
<path d="M467.5 522.8L452.6 593.1"/>
<path d="M465.1 522.3L450.2 592.5"/>
<path d="M462.6 521.8L447.7 592.0"/>
<path d="M460.2 521.3L445.3 591.5"/>
<path d="M457.8 520.7L442.8 591.0"/>
<path d="M455.3 520.2L440.4 590.5"/>
<path d="M452.9 519.7L437.9 589.9"/>
<path d="M450.4 519.2L435.5 589.4"/>
<path d="M448.0 518.7L433.0 588.9"/>
<path d="M445.5 518.2L430.6 588.4"/>
<path d="M443.1 517.6L428.2 587.9"/>
<path d="M440.6 517.1L425.7 587.3"/>
<path d="M438.2 516.6L423.3 586.8"/>
<path d="M435.7 516.1L420.8 586.3"/>
<path d="M433.3 515.6L418.4 585.8"/>
<path d="M430.9 515.0L415.9 585.3"/>
<path d="M428.4 514.5L413.5 584.7"/>
<path d="M426.0 514.0L411.0 584.2"/>
<path d="M423.5 513.5L408.6 583.7"/>
<path d="M421.1 513.0L406.1 583.2"/>
<path d="M418.6 512.4L403.7 582.7"/>
<path d="M416.2 511.9L401.3 582.1"/>
<path d="M413.7 511.4L398.8 581.6"/>
<path d="M411.3 510.9L396.4 581.1"/>
<path d="M408.8 510.4L393.9 580.6"/>
<path d="M406.4 509.8L391.5 580.1"/>
<path d="M404.0 509.3L389.0 579.5"/>
<path d="M401.5 508.8L386.6 579.0"/>
</g>
<ellipse cx="412" cy="567" rx="9" ry="6" fill="#2c4a8a" opacity="0.9"/>
<g transform="translate(428.6 546.5) rotate(13)"><rect x="-21.0" y="-4.8" width="42.0" height="9.6" fill="#ee0a0a"/><rect x="-21.0" y="3.5" width="42.0" height="1.3" fill="#b40000"/></g><g transform="translate(428.6 546.5) rotate(90)"><rect x="-19.5" y="-4.8" width="39.0" height="9.6" fill="#ee0a0a"/><rect x="-19.5" y="3.5" width="39.0" height="1.3" fill="#b40000"/></g>
<circle cx="433.7" cy="527.6" r="3.6" fill="#b9b9b9" stroke="#8a8a8a" stroke-width="0.6"/><path d="M432.5 531 L431 538" stroke="#ccc" stroke-width="1.5"/>
<rect x="360.0" y="218.0" width="31.5" height="15.0" fill="#c8c8c8"/><text x="375.8" y="229.8" font-size="11.3" text-anchor="middle" fill="#000" font-family="Liberation Sans, sans-serif">400.0</text>
<rect x="83.0" y="378.0" width="32.0" height="15.0" fill="#c8c8c8"/><text x="99.0" y="389.8" font-size="11.3" text-anchor="middle" fill="#000" font-family="Liberation Sans, sans-serif">230.0</text>
<rect x="71.3" y="470.0" width="31.7" height="14.6" fill="#c8c8c8"/><text x="87.1" y="481.4" font-size="11.3" text-anchor="middle" fill="#000" font-family="Liberation Sans, sans-serif">180.0</text>
<rect x="435.2" y="506.3" width="31.4" height="12.6" fill="#c8c8c8"/><text x="450.9" y="515.7" font-size="11.3" text-anchor="middle" fill="#000" font-family="Liberation Sans, sans-serif">190.0</text>
<rect x="140.0" y="736.0" width="31.5" height="14.4" fill="#c8c8c8"/><text x="155.8" y="747.2" font-size="11.3" text-anchor="middle" fill="#000" font-family="Liberation Sans, sans-serif">500.0</text>
<path d="M363.4 256.0L365.8 285.0" stroke="#c4c4c4" stroke-width="3" fill="none"/><polygon points="362.3,243.0 359.2,256.3 367.6,255.6" fill="#a8a8a8" />
<path d="M99.8 406.5L121.0 424.0" stroke="#8e8e8e" stroke-width="3.4" fill="none"/><polygon points="90.6,398.8 96.5,410.5 103.2,402.5" fill="#8e8e8e" />
<path d="M90.4 491.7L113.6 500.0" stroke="#cfcfcf" stroke-width="3" fill="none"/><polygon points="80.0,488.0 88.9,495.7 91.8,487.7" fill="#9a9a9a" />
<path d="M173 732.6 L160 741" stroke="#8e8e8e" stroke-width="1.8"/>
<path d="M674.5 396.6 L681 390.2" stroke="#9a9a9a" stroke-width="2.6"/>
</svg>
<!-- part_right -->
<div class="t" style="left:1131.60px;top:203.40px;height:18px;line-height:18px;font-size:12.5px;color:#f37021;font-weight:bold;letter-spacing:-0.425px;">uction cost</div>
<div class="t" style="left:1200.50px;top:203.40px;height:18px;line-height:18px;font-size:12.5px;color:#111;">-</div>
<div class="t" style="left:1209.20px;top:203.40px;height:18px;line-height:18px;font-size:12.5px;color:#111;font-weight:bold;letter-spacing:-0.456px;">465 €</div>
<svg style="position:absolute;left:1260px;top:210px" width="85" height="75" viewBox="1260 210 85 75">
<ellipse cx="1308" cy="259.5" rx="41" ry="23.5" fill="#e4e4e4"/>
<ellipse cx="1307" cy="257" rx="30" ry="15" fill="#fff"/>
<polygon points="1279,224 1305,216 1336,226 1311,236.5" fill="#b1b1b1"/>
<polygon points="1279,224 1311,236.5 1311.5,276 1282,258" fill="#9a9a9a"/>
<polygon points="1311,236.5 1336,226 1332,257 1311.5,276" fill="#8f8f8f"/>
<path d="M1279 224 L1305 216 L1336 226 L1311 236.5 Z M1311 236.5 L1311.5 276 M1279 224 L1282 258 L1311.5 276 L1332 257 L1336 226 M1305 216 L1304 247 L1282 258 M1304 247 L1332 257" stroke="#6f6f6f" stroke-width="0.8" fill="none"/>
<path d="M1270 280 L1278 274 M1274 273 L1278 274 L1283 277" stroke="#777" stroke-width="1.6" fill="none"/>
<path d="M1337 270 L1348 276" stroke="#aaa" stroke-width="1"/>
<path d="M1275 246 L1280 246" stroke="#888" stroke-width="1.2"/>
<path d="M1293 250 l3 -1 M1296 247 l2 4 M1322 246 l2 3 M1307 225 l3 1" stroke="#fff" stroke-width="1"/>
</svg>
<svg style="position:absolute;left:1222px;top:310px" width="8" height="8" viewBox="0 0 8 8"><polygon points="7,1 7,7 1,7" fill="#444"/></svg>
<div class="t" style="left:1246.30px;top:306.40px;height:18px;line-height:18px;font-size:12.5px;color:#333;font-weight:bold;letter-spacing:0.274px;">Members</div>
<svg style="position:absolute;left:1236px;top:325px" width="101" height="21" viewBox="0 0 101 21"><polygon points="0,0 86,0 100,10.5 86,21 0,21" fill="#f37021"/></svg>
<div style="position:absolute;left:1246px;top:330.5px;width:11px;height:11px;border-radius:2px;background:#fff"></div>
<svg style="position:absolute;left:1246px;top:326px" width="16" height="16" viewBox="0 0 16 16"><path d="M1.8 8.2 L7 13.6 L12.9 3" stroke="#f7901e" stroke-width="2.2" fill="none"/></svg>
<div class="t" style="left:1273.00px;top:328.40px;height:18px;line-height:18px;font-size:12.5px;color:#fff;text-decoration:underline;-webkit-text-stroke:0.3px #fff;">C</div>
<div style="position:absolute;left:1246px;top:352.5px;width:11px;height:11px;border-radius:2px;background:#e4e4e4"></div>
<svg style="position:absolute;left:1246px;top:348px" width="16" height="16" viewBox="0 0 16 16"><path d="M1.8 8.2 L7 13.6 L12.9 3" stroke="#f7901e" stroke-width="2.2" fill="none"/></svg>
<div class="t" style="left:1273.30px;top:350.40px;height:18px;line-height:18px;font-size:12.5px;color:#3a3a3a;letter-spacing:-1.245px;-webkit-text-stroke:0.3px #3a3a3a;">B1</div>
<div style="position:absolute;left:1246px;top:374.5px;width:11px;height:11px;border-radius:2px;background:#e4e4e4"></div>
<svg style="position:absolute;left:1246px;top:370px" width="16" height="16" viewBox="0 0 16 16"><path d="M1.8 8.2 L7 13.6 L12.9 3" stroke="#f7901e" stroke-width="2.2" fill="none"/></svg>
<div class="t" style="left:1273.30px;top:372.40px;height:18px;line-height:18px;font-size:12.5px;color:#3a3a3a;letter-spacing:-1.245px;-webkit-text-stroke:0.3px #3a3a3a;">B2</div>
<div style="position:absolute;left:1246px;top:396.5px;width:11px;height:11px;border-radius:2px;background:#e4e4e4"></div>
<svg style="position:absolute;left:1246px;top:392px" width="16" height="16" viewBox="0 0 16 16"><path d="M1.8 8.2 L7 13.6 L12.9 3" stroke="#f7901e" stroke-width="2.2" fill="none"/></svg>
<div class="t" style="left:1273.30px;top:394.40px;height:18px;line-height:18px;font-size:12.5px;color:#3a3a3a;letter-spacing:-1.245px;-webkit-text-stroke:0.3px #3a3a3a;">B3</div>
<div style="position:absolute;left:1246px;top:418.5px;width:11px;height:11px;border-radius:2px;background:#e4e4e4"></div>
<svg style="position:absolute;left:1246px;top:414px" width="16" height="16" viewBox="0 0 16 16"><path d="M1.8 8.2 L7 13.6 L12.9 3" stroke="#f7901e" stroke-width="2.2" fill="none"/></svg>
<div class="t" style="left:1273.30px;top:416.40px;height:18px;line-height:18px;font-size:12.5px;color:#3a3a3a;letter-spacing:-1.245px;-webkit-text-stroke:0.3px #3a3a3a;">B4</div>
<div style="position:absolute;left:1246px;top:440.5px;width:11px;height:11px;border-radius:2px;background:#e4e4e4"></div>
<svg style="position:absolute;left:1246px;top:436px" width="16" height="16" viewBox="0 0 16 16"><path d="M1.8 8.2 L7 13.6 L12.9 3" stroke="#f7901e" stroke-width="2.2" fill="none"/></svg>
<div class="t" style="left:1273.30px;top:438.40px;height:18px;line-height:18px;font-size:12.5px;color:#3a3a3a;letter-spacing:0.417px;-webkit-text-stroke:0.3px #3a3a3a;">M6</div>
<div style="position:absolute;left:1246px;top:462.5px;width:11px;height:11px;border-radius:2px;background:#e4e4e4"></div>
<svg style="position:absolute;left:1246px;top:458px" width="16" height="16" viewBox="0 0 16 16"><path d="M1.8 8.2 L7 13.6 L12.9 3" stroke="#f7901e" stroke-width="2.2" fill="none"/></svg>
<div class="t" style="left:1273.30px;top:460.40px;height:18px;line-height:18px;font-size:12.5px;color:#3a3a3a;letter-spacing:0.417px;-webkit-text-stroke:0.3px #3a3a3a;">M7</div>
<div style="position:absolute;left:1246px;top:484.5px;width:11px;height:11px;border-radius:2px;background:#e4e4e4"></div>
<svg style="position:absolute;left:1246px;top:480px" width="16" height="16" viewBox="0 0 16 16"><path d="M1.8 8.2 L7 13.6 L12.9 3" stroke="#f7901e" stroke-width="2.2" fill="none"/></svg>
<div class="t" style="left:1273.30px;top:482.40px;height:18px;line-height:18px;font-size:12.5px;color:#3a3a3a;letter-spacing:0.417px;-webkit-text-stroke:0.3px #3a3a3a;">M8</div>
<div style="position:absolute;left:1246px;top:506.5px;width:11px;height:11px;border-radius:2px;background:#e4e4e4"></div>
<svg style="position:absolute;left:1246px;top:502px" width="16" height="16" viewBox="0 0 16 16"><path d="M1.8 8.2 L7 13.6 L12.9 3" stroke="#f7901e" stroke-width="2.2" fill="none"/></svg>
<div class="t" style="left:1273.30px;top:504.40px;height:18px;line-height:18px;font-size:12.5px;color:#3a3a3a;letter-spacing:0.417px;-webkit-text-stroke:0.3px #3a3a3a;">M9</div>
<svg style="position:absolute;left:1222px;top:530px" width="8" height="8" viewBox="0 0 8 8"><polygon points="7,1 7,7 1,7" fill="#444"/></svg>
<div class="t" style="left:1246.30px;top:526.40px;height:18px;line-height:18px;font-size:12.5px;color:#333;font-weight:bold;letter-spacing:0.014px;">Load effects</div>
<div style="position:absolute;left:1246px;top:550.5px;width:11px;height:11px;border-radius:2px;background:#e4e4e4"></div>
<svg style="position:absolute;left:1246px;top:546px" width="16" height="16" viewBox="0 0 16 16"><path d="M1.8 8.2 L7 13.6 L12.9 3" stroke="#f7901e" stroke-width="2.2" fill="none"/></svg>
<div class="t" style="left:1273.30px;top:548.40px;height:18px;line-height:18px;font-size:12.5px;color:#3a3a3a;letter-spacing:-1.314px;-webkit-text-stroke:0.3px #3a3a3a;">LE1</div>
<svg style="position:absolute;left:1222px;top:574px" width="8" height="8" viewBox="0 0 8 8"><polygon points="7,1 7,7 1,7" fill="#444"/></svg>
<div class="t" style="left:1246.30px;top:570.40px;height:18px;line-height:18px;font-size:12.5px;color:#333;font-weight:bold;letter-spacing:0.101px;">Operations</div>
<div style="position:absolute;left:1246px;top:594.5px;width:11px;height:11px;border-radius:2px;background:#e4e4e4"></div>
<svg style="position:absolute;left:1246px;top:590px" width="16" height="16" viewBox="0 0 16 16"><path d="M1.8 8.2 L7 13.6 L12.9 3" stroke="#f7901e" stroke-width="2.2" fill="none"/></svg>
<div class="t" style="left:1273.30px;top:592.40px;height:18px;line-height:18px;font-size:12.5px;color:#3a3a3a;letter-spacing:-1.009px;-webkit-text-stroke:0.3px #3a3a3a;">SP1</div>
<div style="position:absolute;left:1246px;top:616.5px;width:11px;height:11px;border-radius:2px;background:#e4e4e4"></div>
<svg style="position:absolute;left:1246px;top:612px" width="16" height="16" viewBox="0 0 16 16"><path d="M1.8 8.2 L7 13.6 L12.9 3" stroke="#f7901e" stroke-width="2.2" fill="none"/></svg>
<div class="t" style="left:1273.30px;top:614.40px;height:18px;line-height:18px;font-size:12.5px;color:#3a3a3a;letter-spacing:-0.796px;-webkit-text-stroke:0.3px #3a3a3a;">PCUT1</div>
<div style="position:absolute;left:1246px;top:638.5px;width:11px;height:11px;border-radius:2px;background:#e4e4e4"></div>
<svg style="position:absolute;left:1246px;top:634px" width="16" height="16" viewBox="0 0 16 16"><path d="M1.8 8.2 L7 13.6 L12.9 3" stroke="#f7901e" stroke-width="2.2" fill="none"/></svg>
<div class="t" style="left:1273.30px;top:636.40px;height:18px;line-height:18px;font-size:12.5px;color:#3a3a3a;letter-spacing:-1.009px;-webkit-text-stroke:0.3px #3a3a3a;">SP2</div>
<div style="position:absolute;left:1246px;top:660.5px;width:11px;height:11px;border-radius:2px;background:#e4e4e4"></div>
<svg style="position:absolute;left:1246px;top:656px" width="16" height="16" viewBox="0 0 16 16"><path d="M1.8 8.2 L7 13.6 L12.9 3" stroke="#f7901e" stroke-width="2.2" fill="none"/></svg>
<div class="t" style="left:1273.30px;top:658.40px;height:18px;line-height:18px;font-size:12.5px;color:#3a3a3a;letter-spacing:-1.009px;-webkit-text-stroke:0.3px #3a3a3a;">SP3</div>
<div style="position:absolute;left:1246px;top:682.5px;width:11px;height:11px;border-radius:2px;background:#e4e4e4"></div>
<svg style="position:absolute;left:1246px;top:678px" width="16" height="16" viewBox="0 0 16 16"><path d="M1.8 8.2 L7 13.6 L12.9 3" stroke="#f7901e" stroke-width="2.2" fill="none"/></svg>
<div class="t" style="left:1273.30px;top:680.40px;height:18px;line-height:18px;font-size:12.5px;color:#3a3a3a;letter-spacing:-0.732px;-webkit-text-stroke:0.3px #3a3a3a;">GRD1</div>
<div style="position:absolute;left:1246px;top:704.5px;width:11px;height:11px;border-radius:2px;background:#e4e4e4"></div>
<svg style="position:absolute;left:1246px;top:700px" width="16" height="16" viewBox="0 0 16 16"><path d="M1.8 8.2 L7 13.6 L12.9 3" stroke="#f7901e" stroke-width="2.2" fill="none"/></svg>
<div class="t" style="left:1273.30px;top:702.40px;height:18px;line-height:18px;font-size:12.5px;color:#3a3a3a;letter-spacing:0.079px;-webkit-text-stroke:0.3px #3a3a3a;">Weld1</div>
<div style="position:absolute;left:1246px;top:726.5px;width:11px;height:11px;border-radius:2px;background:#e4e4e4"></div>
<svg style="position:absolute;left:1246px;top:722px" width="16" height="16" viewBox="0 0 16 16"><path d="M1.8 8.2 L7 13.6 L12.9 3" stroke="#f7901e" stroke-width="2.2" fill="none"/></svg>
<div class="t" style="left:1273.30px;top:724.40px;height:18px;line-height:18px;font-size:12.5px;color:#3a3a3a;letter-spacing:0.079px;-webkit-text-stroke:0.3px #3a3a3a;">Weld2</div>
<div style="position:absolute;left:1246px;top:748.5px;width:11px;height:11px;border-radius:2px;background:#e4e4e4"></div>
<svg style="position:absolute;left:1246px;top:744px" width="16" height="16" viewBox="0 0 16 16"><path d="M1.8 8.2 L7 13.6 L12.9 3" stroke="#f7901e" stroke-width="2.2" fill="none"/></svg>
<div class="t" style="left:1273.30px;top:746.40px;height:18px;line-height:18px;font-size:12.5px;color:#3a3a3a;letter-spacing:0.079px;-webkit-text-stroke:0.3px #3a3a3a;">Weld3</div>
<div style="position:absolute;left:1246px;top:770.5px;width:11px;height:11px;border-radius:2px;background:#e4e4e4"></div>
<svg style="position:absolute;left:1246px;top:766px" width="16" height="16" viewBox="0 0 16 16"><path d="M1.8 8.2 L7 13.6 L12.9 3" stroke="#f7901e" stroke-width="2.2" fill="none"/></svg>
<div class="t" style="left:1273.30px;top:768.40px;height:18px;line-height:18px;font-size:12.5px;color:#3a3a3a;letter-spacing:0.079px;-webkit-text-stroke:0.3px #3a3a3a;">Weld4</div>
<div style="position:absolute;left:1246px;top:792.5px;width:11px;height:11px;border-radius:2px;background:#e4e4e4"></div>
<svg style="position:absolute;left:1246px;top:788px" width="16" height="16" viewBox="0 0 16 16"><path d="M1.8 8.2 L7 13.6 L12.9 3" stroke="#f7901e" stroke-width="2.2" fill="none"/></svg>
<div class="t" style="left:1273.30px;top:790.40px;height:18px;line-height:18px;font-size:12.5px;color:#3a3a3a;letter-spacing:-1.009px;-webkit-text-stroke:0.3px #3a3a3a;">SP4</div>
<div style="position:absolute;left:1246px;top:814.5px;width:11px;height:11px;border-radius:2px;background:#e4e4e4"></div>
<svg style="position:absolute;left:1246px;top:810px" width="16" height="16" viewBox="0 0 16 16"><path d="M1.8 8.2 L7 13.6 L12.9 3" stroke="#f7901e" stroke-width="2.2" fill="none"/></svg>
<div class="t" style="left:1273.30px;top:812.40px;height:18px;line-height:18px;font-size:12.5px;color:#3a3a3a;letter-spacing:-0.796px;-webkit-text-stroke:0.3px #3a3a3a;">PCUT2</div>
<div style="position:absolute;left:1246px;top:836.5px;width:11px;height:11px;border-radius:2px;background:#e4e4e4"></div>
<svg style="position:absolute;left:1246px;top:832px" width="16" height="16" viewBox="0 0 16 16"><path d="M1.8 8.2 L7 13.6 L12.9 3" stroke="#f7901e" stroke-width="2.2" fill="none"/></svg>
<div class="t" style="left:1273.30px;top:834.40px;height:18px;line-height:18px;font-size:12.5px;color:#3a3a3a;letter-spacing:-1.009px;-webkit-text-stroke:0.3px #3a3a3a;">SP5</div>
<div style="position:absolute;left:1246px;top:858.5px;width:11px;height:11px;border-radius:2px;background:#e4e4e4"></div>
<svg style="position:absolute;left:1246px;top:854px" width="16" height="16" viewBox="0 0 16 16"><path d="M1.8 8.2 L7 13.6 L12.9 3" stroke="#f7901e" stroke-width="2.2" fill="none"/></svg>
<div class="t" style="left:1273.30px;top:856.40px;height:18px;line-height:18px;font-size:12.5px;color:#3a3a3a;letter-spacing:-1.009px;-webkit-text-stroke:0.3px #3a3a3a;">SP6</div>
<div style="position:absolute;left:1246px;top:880.5px;width:11px;height:11px;border-radius:2px;background:#e4e4e4"></div>
<svg style="position:absolute;left:1246px;top:876px" width="16" height="16" viewBox="0 0 16 16"><path d="M1.8 8.2 L7 13.6 L12.9 3" stroke="#f7901e" stroke-width="2.2" fill="none"/></svg>
<div class="t" style="left:1273.30px;top:878.40px;height:18px;line-height:18px;font-size:12.5px;color:#3a3a3a;letter-spacing:-0.732px;-webkit-text-stroke:0.3px #3a3a3a;">GRD2</div>
<div style="position:absolute;left:1246px;top:902.5px;width:11px;height:11px;border-radius:2px;background:#e4e4e4"></div>
<svg style="position:absolute;left:1246px;top:898px" width="16" height="16" viewBox="0 0 16 16"><path d="M1.8 8.2 L7 13.6 L12.9 3" stroke="#f7901e" stroke-width="2.2" fill="none"/></svg>
<div class="t" style="left:1273.30px;top:900.40px;height:18px;line-height:18px;font-size:12.5px;color:#3a3a3a;letter-spacing:0.079px;-webkit-text-stroke:0.3px #3a3a3a;">Weld5</div>
<div style="position:absolute;left:1246px;top:924.5px;width:11px;height:11px;border-radius:2px;background:#e4e4e4"></div>
<svg style="position:absolute;left:1246px;top:920px" width="16" height="16" viewBox="0 0 16 16"><path d="M1.8 8.2 L7 13.6 L12.9 3" stroke="#f7901e" stroke-width="2.2" fill="none"/></svg>
<div class="t" style="left:1273.30px;top:922.40px;height:18px;line-height:18px;font-size:12.5px;color:#3a3a3a;letter-spacing:0.079px;-webkit-text-stroke:0.3px #3a3a3a;">Weld6</div>
<div style="position:absolute;left:1246px;top:946.5px;width:11px;height:11px;border-radius:2px;background:#e4e4e4"></div>
<svg style="position:absolute;left:1246px;top:942px" width="16" height="16" viewBox="0 0 16 16"><path d="M1.8 8.2 L7 13.6 L12.9 3" stroke="#f7901e" stroke-width="2.2" fill="none"/></svg>
<div class="t" style="left:1273.30px;top:944.40px;height:18px;line-height:18px;font-size:12.5px;color:#3a3a3a;letter-spacing:0.079px;-webkit-text-stroke:0.3px #3a3a3a;">Weld7</div>
<div style="position:absolute;left:1246px;top:968.5px;width:11px;height:11px;border-radius:2px;background:#e4e4e4"></div>
<svg style="position:absolute;left:1246px;top:964px" width="16" height="16" viewBox="0 0 16 16"><path d="M1.8 8.2 L7 13.6 L12.9 3" stroke="#f7901e" stroke-width="2.2" fill="none"/></svg>
<div class="t" style="left:1273.30px;top:966.40px;height:18px;line-height:18px;font-size:12.5px;color:#3a3a3a;letter-spacing:0.079px;-webkit-text-stroke:0.3px #3a3a3a;">Weld8</div>
<div style="position:absolute;left:1246px;top:990.5px;width:11px;height:11px;border-radius:2px;background:#e4e4e4"></div>
<svg style="position:absolute;left:1246px;top:986px" width="16" height="16" viewBox="0 0 16 16"><path d="M1.8 8.2 L7 13.6 L12.9 3" stroke="#f7901e" stroke-width="2.2" fill="none"/></svg>
<div class="t" style="left:1273.30px;top:988.40px;height:18px;line-height:18px;font-size:12.5px;color:#3a3a3a;letter-spacing:-1.009px;-webkit-text-stroke:0.3px #3a3a3a;">SP7</div>
<div style="position:absolute;left:1246px;top:1012.5px;width:11px;height:11px;border-radius:2px;background:#e4e4e4"></div>
<svg style="position:absolute;left:1246px;top:1008px" width="16" height="16" viewBox="0 0 16 16"><path d="M1.8 8.2 L7 13.6 L12.9 3" stroke="#f7901e" stroke-width="2.2" fill="none"/></svg>
<div class="t" style="left:1273.30px;top:1010.40px;height:18px;line-height:18px;font-size:12.5px;color:#3a3a3a;letter-spacing:-0.796px;-webkit-text-stroke:0.3px #3a3a3a;">PCUT3</div>
<div style="position:absolute;left:1246px;top:1034.5px;width:11px;height:11px;border-radius:2px;background:#e4e4e4"></div>
<svg style="position:absolute;left:1246px;top:1030px" width="16" height="16" viewBox="0 0 16 16"><path d="M1.8 8.2 L7 13.6 L12.9 3" stroke="#f7901e" stroke-width="2.2" fill="none"/></svg>
<div class="t" style="left:1273.30px;top:1032.40px;height:18px;line-height:18px;font-size:12.5px;color:#3a3a3a;letter-spacing:-1.009px;-webkit-text-stroke:0.3px #3a3a3a;">SP8</div>
<div style="position:absolute;left:1246px;top:1056.5px;width:11px;height:11px;border-radius:2px;background:#e4e4e4"></div>
<svg style="position:absolute;left:1246px;top:1052px" width="16" height="16" viewBox="0 0 16 16"><path d="M1.8 8.2 L7 13.6 L12.9 3" stroke="#f7901e" stroke-width="2.2" fill="none"/></svg>
<div class="t" style="left:1273.30px;top:1054.40px;height:18px;line-height:18px;font-size:12.5px;color:#3a3a3a;letter-spacing:-1.009px;-webkit-text-stroke:0.3px #3a3a3a;">SP9</div>
<div style="position:absolute;left:1246px;top:1078.5px;width:11px;height:11px;border-radius:2px;background:#e4e4e4"></div>
<svg style="position:absolute;left:1246px;top:1074px" width="16" height="16" viewBox="0 0 16 16"><path d="M1.8 8.2 L7 13.6 L12.9 3" stroke="#f7901e" stroke-width="2.2" fill="none"/></svg>
<div class="t" style="left:1273.30px;top:1076.40px;height:18px;line-height:18px;font-size:12.5px;color:#3a3a3a;letter-spacing:-0.732px;-webkit-text-stroke:0.3px #3a3a3a;">GRD3</div>
<div class="r" style="left:1341px;top:303px;width:8px;height:789px;background:#f0f0f0;"></div>
<div class="r" style="left:1341px;top:303px;width:8px;height:414px;background:#c8c8c8;"></div>
<!-- part_dialog -->
<div id="dlg"></div>
<div class="t" style="left:686.00px;top:179.90px;height:17px;line-height:17px;font-size:12px;color:#333;letter-spacing:-0.027px;">Code and calculation settings</div>
<div class="r" style="left:1012px;top:187px;width:10px;height:2px;background:#222;"></div>
<div style="position:absolute;left:1057px;top:182px;width:9px;height:9px;box-sizing:border-box;border:1px solid #222;border-top:3px solid #222"></div>
<svg style="position:absolute;left:1101px;top:181px" width="11" height="11" viewBox="0 0 11 11"><path d="M1.2 1.2 L9.8 9.8 M9.8 1.2 L1.2 9.8" stroke="#222" stroke-width="1.9" fill="none"/></svg>
<div class="r" style="left:1109px;top:207px;width:16px;height:820px;background:#f0f0f0;"></div>
<div class="r" style="left:1109px;top:443px;width:16px;height:567px;background:#c9c9c9;"></div>
<svg style="position:absolute;left:1112px;top:211px" width="10" height="8" viewBox="0 0 10 8"><path d="M1 6 L5 2 L9 6" stroke="#a0a0a0" stroke-width="1" fill="none"/></svg>
<svg style="position:absolute;left:1112px;top:1015px" width="10" height="8" viewBox="0 0 10 8"><path d="M1 2 L5 6 L9 2" stroke="#8a8a8a" stroke-width="1" fill="none"/></svg>
<div class="t" style="left:721.30px;top:209.90px;height:17px;line-height:17px;font-size:12.4px;color:#111;-webkit-text-stroke:0.25px #111;">γ Inst</div>
<div class="r" style="left:1005px;top:207.2px;width:101px;height:20.5px;background:#f0f0f0;"></div>
<div class="t" style="left:1010.00px;top:209.90px;height:17px;line-height:17px;font-size:12px;color:#111;-webkit-text-stroke:0.2px #111;">1.2</div>
<div class="t" style="left:721.30px;top:233.90px;height:17px;line-height:17px;font-size:12.4px;color:#111;-webkit-text-stroke:0.25px #111;">γ M3</div>
<div class="r" style="left:1005px;top:230.2px;width:101px;height:21.5px;background:#f0f0f0;"></div>
<div class="t" style="left:1010.00px;top:233.90px;height:17px;line-height:17px;font-size:12px;color:#111;-webkit-text-stroke:0.2px #111;">1.25</div>
<div style="position:absolute;left:695px;top:265px;width:0;height:0;border-left:5px solid transparent;border-right:5px solid transparent;border-top:8px solid #f37021"></div>
<div class="t" style="left:721.00px;top:259.90px;height:18px;line-height:18px;font-size:13px;color:#f37021;font-weight:bold;letter-spacing:0.470px;">Concrete block</div>
<div class="t" style="left:721.30px;top:286.90px;height:17px;line-height:17px;font-size:12px;color:#111;letter-spacing:0.204px;-webkit-text-stroke:0.25px #111;">Anchor length for stiffness calculation [d]</div>
<div class="r" style="left:1005px;top:283.2px;width:101px;height:21.5px;background:#f0f0f0;"></div>
<div class="t" style="left:1010.00px;top:286.90px;height:17px;line-height:17px;font-size:12px;color:#111;-webkit-text-stroke:0.2px #111;">8</div>
<div class="t" style="left:721.30px;top:310.90px;height:17px;line-height:17px;font-size:12.4px;color:#111;-webkit-text-stroke:0.25px #111;">Joint coefficient βj</div>
<div class="r" style="left:1005px;top:307.2px;width:101px;height:21.5px;background:#f0f0f0;"></div>
<div class="t" style="left:1010.00px;top:310.90px;height:17px;line-height:17px;font-size:12px;color:#111;-webkit-text-stroke:0.2px #111;">0.67</div>
<div class="t" style="left:721.30px;top:334.90px;height:17px;line-height:17px;font-size:12px;color:#111;letter-spacing:0.029px;-webkit-text-stroke:0.25px #111;">Effective area - influence of mesh size</div>
<div class="r" style="left:1005px;top:331.2px;width:101px;height:21.5px;background:#f0f0f0;"></div>
<div class="t" style="left:1010.00px;top:334.90px;height:17px;line-height:17px;font-size:12px;color:#111;-webkit-text-stroke:0.2px #111;">0.1</div>
<div class="t" style="left:721.30px;top:358.90px;height:17px;line-height:17px;font-size:12.4px;color:#111;-webkit-text-stroke:0.25px #111;">Friction coefficient - concrete</div>
<div class="r" style="left:1005px;top:355.2px;width:101px;height:21.5px;background:#f0f0f0;"></div>
<div class="t" style="left:1010.00px;top:358.90px;height:17px;line-height:17px;font-size:12px;color:#111;-webkit-text-stroke:0.2px #111;">0.25</div>
<div class="t" style="left:721.30px;top:382.90px;height:17px;line-height:17px;font-size:12.4px;color:#111;-webkit-text-stroke:0.25px #111;">αcc</div>
<div class="r" style="left:1005px;top:379.2px;width:101px;height:21.5px;background:#f0f0f0;"></div>
<div class="t" style="left:1010.00px;top:382.90px;height:17px;line-height:17px;font-size:12px;color:#111;-webkit-text-stroke:0.2px #111;">1</div>
<div class="t" style="left:721.30px;top:405.90px;height:17px;line-height:17px;font-size:12.4px;color:#111;-webkit-text-stroke:0.25px #111;">Cracked concrete</div>
<div style="position:absolute;left:1011px;top:406.7px;width:11px;height:11px;border-radius:2px;background:#e3e3e3"></div>
<svg style="position:absolute;left:1011px;top:402.7px" width="16" height="16" viewBox="0 0 16 16"><path d="M1.8 10 L5.9 14.4 L12.6 3.3" stroke="#f7901e" stroke-width="2.2" fill="none" stroke-linejoin="miter"/></svg>
<div style="position:absolute;left:695px;top:436px;width:0;height:0;border-left:5px solid transparent;border-right:5px solid transparent;border-top:8px solid #f37021"></div>
<div class="t" style="left:721.00px;top:430.90px;height:18px;line-height:18px;font-size:13px;color:#f37021;font-weight:bold;letter-spacing:0.359px;">Check settings</div>
<div class="t" style="left:721.30px;top:457.90px;height:17px;line-height:17px;font-size:12.4px;color:#111;-webkit-text-stroke:0.25px #111;">Limit plastic strain [%]</div>
<div class="r" style="left:1005px;top:454.2px;width:101px;height:21.5px;background:#f0f0f0;"></div>
<div class="t" style="left:1010.00px;top:457.90px;height:17px;line-height:17px;font-size:12px;color:#111;-webkit-text-stroke:0.2px #111;">5.0</div>
<div class="t" style="left:721.30px;top:481.90px;height:17px;line-height:17px;font-size:12.4px;color:#111;-webkit-text-stroke:0.25px #111;">Local deformation limit [%]</div>
<div class="r" style="left:1005px;top:478.2px;width:101px;height:21.5px;background:#f0f0f0;"></div>
<div class="t" style="left:1010.00px;top:481.90px;height:17px;line-height:17px;font-size:12px;color:#111;-webkit-text-stroke:0.2px #111;">3.0</div>
<div class="t" style="left:721.30px;top:505.90px;height:17px;line-height:17px;font-size:12.4px;color:#111;-webkit-text-stroke:0.25px #111;">Warning plastic strain [%]</div>
<div class="r" style="left:1005px;top:502.2px;width:101px;height:21.5px;background:#f0f0f0;"></div>
<div class="t" style="left:1010.00px;top:505.90px;height:17px;line-height:17px;font-size:12px;color:#111;-webkit-text-stroke:0.2px #111;">3.0</div>
<div class="t" style="left:721.30px;top:529.90px;height:17px;line-height:17px;font-size:12.4px;color:#111;-webkit-text-stroke:0.25px #111;">Warning check level [%]</div>
<div class="r" style="left:1005px;top:526.2px;width:101px;height:21.5px;background:#f0f0f0;"></div>
<div class="t" style="left:1010.00px;top:529.90px;height:17px;line-height:17px;font-size:12px;color:#111;-webkit-text-stroke:0.2px #111;">95.0</div>
<div class="t" style="left:721.30px;top:553.90px;height:17px;line-height:17px;font-size:12.4px;color:#111;-webkit-text-stroke:0.25px #111;">Optimal check level [%]</div>
<div class="r" style="left:1005px;top:550.2px;width:101px;height:21.5px;background:#f0f0f0;"></div>
<div class="t" style="left:1010.00px;top:553.90px;height:17px;line-height:17px;font-size:12px;color:#111;-webkit-text-stroke:0.2px #111;">60.0</div>
<div class="t" style="left:721.30px;top:577.90px;height:17px;line-height:17px;font-size:12.4px;color:#111;-webkit-text-stroke:0.25px #111;">Distance between bolts [d]</div>
<div class="r" style="left:1005px;top:574.2px;width:101px;height:21.5px;background:#f0f0f0;"></div>
<div class="t" style="left:1010.00px;top:577.90px;height:17px;line-height:17px;font-size:12px;color:#111;-webkit-text-stroke:0.2px #111;">2.2</div>
<div class="t" style="left:721.30px;top:601.90px;height:17px;line-height:17px;font-size:12.4px;color:#111;-webkit-text-stroke:0.25px #111;">Distance between bolts and edge [d]</div>
<div class="r" style="left:1005px;top:598.2px;width:101px;height:21.5px;background:#f0f0f0;"></div>
<div class="t" style="left:1010.00px;top:601.90px;height:17px;line-height:17px;font-size:12px;color:#111;-webkit-text-stroke:0.2px #111;">1.2</div>
<div class="t" style="left:721.30px;top:625.90px;height:17px;line-height:17px;font-size:12.4px;color:#111;-webkit-text-stroke:0.25px #111;">Anchor detailing: minimum pitch</div>
<div class="r" style="left:1005px;top:622.2px;width:101px;height:21.5px;background:#f0f0f0;"></div>
<div class="t" style="left:1010.00px;top:625.90px;height:17px;line-height:17px;font-size:12px;color:#111;-webkit-text-stroke:0.2px #111;">4</div>
<div class="t" style="left:721.30px;top:649.90px;height:17px;line-height:17px;font-size:12px;color:#111;letter-spacing:0.198px;-webkit-text-stroke:0.25px #111;">Load distribution angle of concrete block [°]</div>
<div class="r" style="left:1005px;top:646.2px;width:101px;height:21.5px;background:#f0f0f0;"></div>
<div class="t" style="left:1010.00px;top:649.90px;height:17px;line-height:17px;font-size:12px;color:#111;-webkit-text-stroke:0.2px #111;">26.6</div>
<div class="t" style="left:721.30px;top:673.90px;height:17px;line-height:17px;font-size:12px;color:#111;letter-spacing:0.123px;-webkit-text-stroke:0.25px #111;">Decreasing Nt,Rd of anchors - cut thread [-]</div>
<div class="r" style="left:1005px;top:670.2px;width:101px;height:21.5px;background:#f0f0f0;"></div>
<div class="t" style="left:1010.00px;top:673.90px;height:17px;line-height:17px;font-size:12px;color:#111;-webkit-text-stroke:0.2px #111;">0.15</div>
<div class="t" style="left:721.30px;top:696.90px;height:17px;line-height:17px;font-size:12.4px;color:#111;-webkit-text-stroke:0.25px #111;">Braced system</div>
<div style="position:absolute;left:1011px;top:697.7px;width:11px;height:11px;border-radius:2px;background:#e3e3e3"></div>
<div class="t" style="left:721.30px;top:718.90px;height:17px;line-height:17px;font-size:12.4px;color:#111;-webkit-text-stroke:0.25px #111;">Bearing check with αb</div>
<div style="position:absolute;left:1011px;top:719.7px;width:11px;height:11px;border-radius:2px;background:#e3e3e3"></div>
<svg style="position:absolute;left:1011px;top:715.7px" width="16" height="16" viewBox="0 0 16 16"><path d="M1.8 10 L5.9 14.4 L12.6 3.3" stroke="#f7901e" stroke-width="2.2" fill="none" stroke-linejoin="miter"/></svg>
<div class="t" style="left:721.30px;top:740.90px;height:17px;line-height:17px;font-size:12.4px;color:#111;-webkit-text-stroke:0.25px #111;">Apply βp influence in FvRd</div>
<div style="position:absolute;left:1011px;top:741.7px;width:11px;height:11px;border-radius:2px;background:#e3e3e3"></div>
<div style="position:absolute;left:695px;top:771px;width:0;height:0;border-left:5px solid transparent;border-right:5px solid transparent;border-top:8px solid #f37021"></div>
<div class="t" style="left:721.00px;top:765.90px;height:18px;line-height:18px;font-size:13px;color:#f37021;font-weight:bold;letter-spacing:0.725px;">Model and mesh</div>
<div class="t" style="left:721.30px;top:792.90px;height:17px;line-height:17px;font-size:12.4px;color:#111;-webkit-text-stroke:0.25px #111;">Default length of standard member [h]</div>
<div class="r" style="left:1005px;top:789.2px;width:101px;height:21.5px;background:#f0f0f0;"></div>
<div class="t" style="left:1010.00px;top:792.90px;height:17px;line-height:17px;font-size:12px;color:#111;-webkit-text-stroke:0.2px #111;">1.5</div>
<div class="t" style="left:721.30px;top:816.90px;height:17px;line-height:17px;font-size:12px;color:#111;letter-spacing:0.275px;-webkit-text-stroke:0.25px #111;">Default length of member with hollow section [h]</div>
<div class="r" style="left:1005px;top:813.2px;width:101px;height:21.5px;background:#f0f0f0;"></div>
<div class="t" style="left:1010.00px;top:816.90px;height:17px;line-height:17px;font-size:12px;color:#111;-webkit-text-stroke:0.2px #111;">2</div>
<div class="t" style="left:721.30px;top:840.90px;height:17px;line-height:17px;font-size:12.4px;color:#111;width:280px;overflow:hidden;white-space:nowrap;-webkit-text-stroke:0.25px #111;">Division of surface of the biggest circular hollow member</div>
<div class="r" style="left:1005px;top:837.2px;width:101px;height:21.5px;background:#f0f0f0;"></div>
<div class="t" style="left:1010.00px;top:840.90px;height:17px;line-height:17px;font-size:12px;color:#111;-webkit-text-stroke:0.2px #111;">64</div>
<div class="t" style="left:721.30px;top:864.90px;height:17px;line-height:17px;font-size:12.4px;color:#111;-webkit-text-stroke:0.25px #111;">Division of arc of rectangular hollow member</div>
<div class="r" style="left:1005px;top:861.2px;width:101px;height:21.5px;background:#f0f0f0;"></div>
<div class="t" style="left:1010.00px;top:864.90px;height:17px;line-height:17px;font-size:12px;color:#111;-webkit-text-stroke:0.2px #111;">3</div>
<div class="t" style="left:721.30px;top:888.90px;height:17px;line-height:17px;font-size:12.4px;color:#111;width:280px;overflow:hidden;white-space:nowrap;-webkit-text-stroke:0.25px #111;">Number of elements on biggest member web or flange</div>
<div class="r" style="left:1005px;top:885.2px;width:101px;height:21.5px;background:#f0f0f0;"></div>
<div class="t" style="left:1010.00px;top:888.90px;height:17px;line-height:17px;font-size:12px;color:#111;-webkit-text-stroke:0.2px #111;">8</div>
<div class="t" style="left:721.30px;top:912.90px;height:17px;line-height:17px;font-size:12.4px;color:#111;width:280px;overflow:hidden;white-space:nowrap;-webkit-text-stroke:0.25px #111;">Number of elements on biggest web of RHS member</div>
<div class="r" style="left:1005px;top:909.2px;width:101px;height:21.5px;background:#f0f0f0;"></div>
<div class="t" style="left:1010.00px;top:912.90px;height:17px;line-height:17px;font-size:12px;color:#111;-webkit-text-stroke:0.2px #111;">16</div>
<div class="t" style="left:721.30px;top:936.90px;height:17px;line-height:17px;font-size:12.4px;color:#111;-webkit-text-stroke:0.25px #111;">Number of analysis iterations</div>
<div class="r" style="left:1005px;top:933.2px;width:101px;height:21.5px;background:#f0f0f0;"></div>
<div class="t" style="left:1010.00px;top:936.90px;height:17px;line-height:17px;font-size:12px;color:#111;-webkit-text-stroke:0.2px #111;">25</div>
<div class="t" style="left:721.30px;top:960.90px;height:17px;line-height:17px;font-size:12.4px;color:#111;-webkit-text-stroke:0.25px #111;">Divergent iterations count</div>
<div class="r" style="left:1005px;top:957.2px;width:101px;height:21.5px;background:#f0f0f0;"></div>
<div class="t" style="left:1010.00px;top:960.90px;height:17px;line-height:17px;font-size:12px;color:#111;-webkit-text-stroke:0.2px #111;">3</div>
<div class="t" style="left:721.30px;top:984.90px;height:17px;line-height:17px;font-size:12.4px;color:#111;-webkit-text-stroke:0.25px #111;">Minimal size of element [mm]</div>
<div class="r" style="left:1005px;top:981.2px;width:101px;height:21.5px;background:#f0f0f0;"></div>
<div class="t" style="left:1010.00px;top:984.90px;height:17px;line-height:17px;font-size:12px;color:#111;-webkit-text-stroke:0.2px #111;">10</div>
<div class="t" style="left:721.30px;top:1008.90px;height:17px;line-height:17px;font-size:12.4px;color:#111;-webkit-text-stroke:0.25px #111;">Maximal size of element [mm]</div>
<div class="r" style="left:1005px;top:1005.2px;width:101px;height:21.5px;background:#f0f0f0;"></div>
<div class="t" style="left:1010.00px;top:1008.90px;height:17px;line-height:17px;font-size:12px;color:#111;-webkit-text-stroke:0.2px #111;">50</div>
<div class="r" style="left:692px;top:1040px;width:45px;height:25px;background:#999;"></div>
<div class="t" style="left:695.50px;top:1045.40px;height:17px;line-height:17px;font-size:12px;color:#fff;letter-spacing:-0.450px;">Expand</div>
<div class="r" style="left:742px;top:1040px;width:50px;height:25px;background:#999;"></div>
<div class="t" style="left:744.75px;top:1045.40px;height:17px;line-height:17px;font-size:12px;color:#fff;letter-spacing:-0.274px;">Collapse</div>
<div class="r" style="left:905px;top:1040px;width:34px;height:25px;background:#999;"></div>
<div class="t" style="left:907.75px;top:1045.40px;height:17px;line-height:17px;font-size:12px;color:#fff;letter-spacing:-0.570px;">Reset</div>
<div class="r" style="left:944px;top:1040px;width:31px;height:25px;background:#999;"></div>
<div class="t" style="left:947.50px;top:1045.40px;height:17px;line-height:17px;font-size:12px;color:#fff;letter-spacing:-0.838px;">Save</div>
<div class="r" style="left:980px;top:1040px;width:70px;height:25px;background:#999;"></div>
<div class="t" style="left:1007.25px;top:1045.40px;height:17px;line-height:17px;font-size:12px;color:#fff;letter-spacing:-0.919px;">OK</div>
<div class="r" style="left:1055px;top:1040px;width:70px;height:25px;background:#999;"></div>
<div class="t" style="left:1072.50px;top:1045.40px;height:17px;line-height:17px;font-size:12px;color:#fff;letter-spacing:-0.392px;">Cancel</div>
<div style="position:absolute;left:998.3px;top:928px;width:33.2px;height:49.6px;border:3px solid #f00;border-radius:7px"></div>
</div>
</body></html>
